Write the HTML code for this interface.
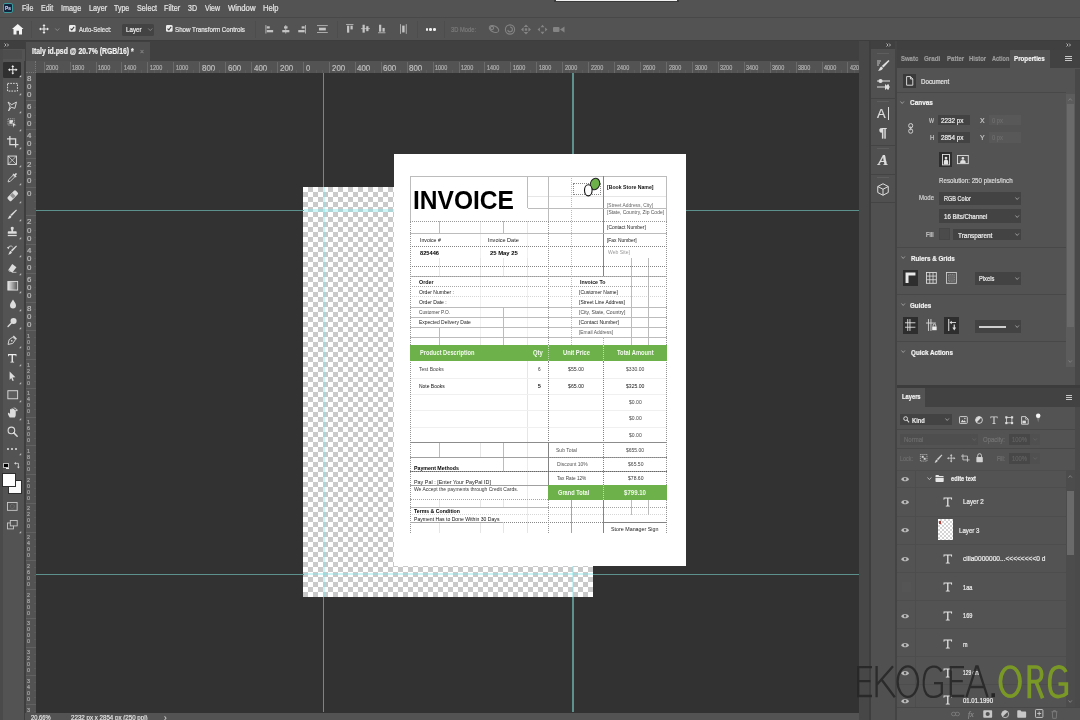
<!DOCTYPE html>
<html>
<head>
<meta charset="utf-8">
<title>Photoshop</title>
<style>
*{box-sizing:border-box;margin:0;padding:0}
html,body{width:1080px;height:720px;overflow:hidden;background:#535353;font-family:"Liberation Sans",sans-serif;color:#ddd}
body{position:relative}
#root{position:absolute;left:0;top:0;width:1080px;height:720px;overflow:hidden;will-change:transform}
.a{position:absolute}
.t{position:absolute;white-space:nowrap;transform-origin:0 50%;display:block}
svg{position:absolute;overflow:visible}
.ui .t{-webkit-text-stroke:.22px currentColor}
#checker{background:repeating-conic-gradient(#cacaca 0 25%,#fff 0 50%) 0 0/10px 10px}
</style>
</head>
<body>
<div id="root">
<div class="a" style="left:36px;top:73px;width:823px;height:639.5px;background:#323232;"></div>
<div class="a" id="checker" style="left:303.2px;top:187px;width:289.8px;height:410.3px"></div>
<div class="a" style="left:323.1px;top:73px;width:1.4px;height:114px;background:#5c918e;"></div>
<div class="a" style="left:323.1px;top:597.3px;width:1.4px;height:115.2px;background:#5c918e;"></div>
<div class="a" style="left:572.2px;top:73px;width:1.4px;height:114px;background:#5c918e;"></div>
<div class="a" style="left:572.2px;top:597.3px;width:1.4px;height:115.2px;background:#5c918e;"></div>
<div class="a" style="left:36px;top:209.8px;width:267.5px;height:1.4px;background:#5c918e;"></div>
<div class="a" style="left:593px;top:209.8px;width:266px;height:1.4px;background:#5c918e;"></div>
<div class="a" style="left:36px;top:573.6px;width:267.5px;height:1.4px;background:#5c918e;"></div>
<div class="a" style="left:593px;top:573.6px;width:266px;height:1.4px;background:#5c918e;"></div>
<div class="a" style="left:322.6px;top:187px;width:2.4px;height:410.3px;background:rgba(120,232,235,.38);"></div>
<div class="a" style="left:571.7px;top:187px;width:2.4px;height:410.3px;background:rgba(120,232,235,.38);"></div>
<div class="a" style="left:303.5px;top:209.3px;width:289.5px;height:2.4px;background:rgba(120,232,235,.38);"></div>
<div class="a" style="left:303.5px;top:573.1px;width:289.5px;height:2.4px;background:rgba(120,232,235,.38);"></div>
<div class="a" id="page" style="left:394px;top:154px;width:292px;height:412px;background:#fff"></div>
<div class="a" style="left:439.0px;top:221.0px;height:12.0px;width:0;border-left:1px solid #e6e6e6"></div>
<div class="a" style="left:479.5px;top:221.0px;height:12.0px;width:0;border-left:1px solid #e6e6e6"></div>
<div class="a" style="left:502.8px;top:221.0px;height:12.0px;width:0;border-left:1px solid #e6e6e6"></div>
<div class="a" style="left:527.0px;top:221.0px;height:12.0px;width:0;border-left:1px solid #e6e6e6"></div>
<div class="a" style="left:439.0px;top:258.0px;height:18.0px;width:0;border-left:1px solid #e6e6e6"></div>
<div class="a" style="left:479.5px;top:258.0px;height:18.0px;width:0;border-left:1px solid #e6e6e6"></div>
<div class="a" style="left:502.8px;top:258.0px;height:18.0px;width:0;border-left:1px solid #e6e6e6"></div>
<div class="a" style="left:527.0px;top:258.0px;height:18.0px;width:0;border-left:1px solid #e6e6e6"></div>
<div class="a" style="left:439.0px;top:337.5px;height:7.5px;width:0;border-left:1px solid #e6e6e6"></div>
<div class="a" style="left:479.5px;top:337.5px;height:7.5px;width:0;border-left:1px solid #e6e6e6"></div>
<div class="a" style="left:502.8px;top:337.5px;height:7.5px;width:0;border-left:1px solid #e6e6e6"></div>
<div class="a" style="left:527.0px;top:337.5px;height:7.5px;width:0;border-left:1px solid #e6e6e6"></div>
<div class="a" style="left:439.0px;top:442.5px;height:14.5px;width:0;border-left:1px solid #e6e6e6"></div>
<div class="a" style="left:479.5px;top:442.5px;height:14.5px;width:0;border-left:1px solid #e6e6e6"></div>
<div class="a" style="left:502.8px;top:442.5px;height:14.5px;width:0;border-left:1px solid #e6e6e6"></div>
<div class="a" style="left:527.0px;top:442.5px;height:14.5px;width:0;border-left:1px solid #e6e6e6"></div>
<div class="a" style="left:439.0px;top:499.5px;height:7.5px;width:0;border-left:1px solid #e6e6e6"></div>
<div class="a" style="left:479.5px;top:499.5px;height:7.5px;width:0;border-left:1px solid #e6e6e6"></div>
<div class="a" style="left:502.8px;top:499.5px;height:7.5px;width:0;border-left:1px solid #e6e6e6"></div>
<div class="a" style="left:527.0px;top:499.5px;height:7.5px;width:0;border-left:1px solid #e6e6e6"></div>
<div class="a" style="left:439.0px;top:522.0px;height:11.3px;width:0;border-left:1px solid #e6e6e6"></div>
<div class="a" style="left:479.5px;top:522.0px;height:11.3px;width:0;border-left:1px solid #e6e6e6"></div>
<div class="a" style="left:502.8px;top:522.0px;height:11.3px;width:0;border-left:1px solid #e6e6e6"></div>
<div class="a" style="left:527.0px;top:522.0px;height:11.3px;width:0;border-left:1px solid #e6e6e6"></div>
<div class="a" style="left:479.5px;top:233.0px;height:25.0px;width:0;border-left:1px solid #f0f0f0"></div>
<div class="a" style="left:479.5px;top:276.0px;height:61.0px;width:0;border-left:1px solid #f0f0f0"></div>
<div class="a" style="left:527.0px;top:233.0px;height:25.0px;width:0;border-left:1px solid #f0f0f0"></div>
<div class="a" style="left:527.0px;top:276.0px;height:61.0px;width:0;border-left:1px solid #f0f0f0"></div>
<div class="a" style="left:527.0px;top:361.0px;height:81.0px;width:0;border-left:1px solid #e6e6e6"></div>
<div class="a" style="left:527.0px;top:457.0px;height:65.0px;width:0;border-left:1px solid #ececec"></div>
<div class="a" style="left:527.5px;top:195.8px;width:139.2px;height:0;border-top:1px solid #e6e6e6"></div>
<div class="a" style="left:410.3px;top:377.5px;width:256.4px;height:0;border-top:1px solid #f0f0f0"></div>
<div class="a" style="left:410.3px;top:393.5px;width:256.4px;height:0;border-top:1px solid #f0f0f0"></div>
<div class="a" style="left:410.3px;top:409.5px;width:256.4px;height:0;border-top:1px solid #f0f0f0"></div>
<div class="a" style="left:410.3px;top:426.5px;width:256.4px;height:0;border-top:1px solid #f0f0f0"></div>
<div class="a" style="left:410.3px;top:296.2px;width:256.4px;height:0;border-top:1px dotted #d6d6d6"></div>
<div class="a" style="left:410.3px;top:513.5px;width:256.4px;height:0;border-top:1px dotted #d6d6d6"></div>
<div class="a" style="left:410.3px;top:175.8px;width:256.4px;height:0;border-top:1px solid #bcbcbc"></div>
<div class="a" style="left:409.8px;top:176.3px;height:44.7px;width:0;border-left:1px solid #bcbcbc"></div>
<div class="a" style="left:409.8px;top:221.0px;height:312.3px;width:0;border-left:1px dotted #959595"></div>
<div class="a" style="left:666.2px;top:176.3px;height:44.7px;width:0;border-left:1px solid #bcbcbc"></div>
<div class="a" style="left:666.2px;top:221.0px;height:312.3px;width:0;border-left:1px dotted #959595"></div>
<div class="a" style="left:547.8px;top:176.3px;height:44.7px;width:0;border-left:1px solid #bcbcbc"></div>
<div class="a" style="left:547.8px;top:221.0px;height:124.0px;width:0;border-left:1px dotted #959595"></div>
<div class="a" style="left:547.8px;top:361.0px;height:81.5px;width:0;border-left:1px dotted #848484"></div>
<div class="a" style="left:547.8px;top:442.5px;height:43.5px;width:0;border-left:1px solid #848484"></div>
<div class="a" style="left:547.8px;top:499.0px;height:34.3px;width:0;border-left:1px dotted #959595"></div>
<div class="a" style="left:571.2px;top:176.3px;height:168.7px;width:0;border-left:1px dotted #bbb"></div>
<div class="a" style="left:571.2px;top:499.0px;height:34.3px;width:0;border-left:1px solid #a5a5a5"></div>
<div class="a" style="left:603.2px;top:176.3px;height:99.7px;width:0;border-left:1px solid #848484"></div>
<div class="a" style="left:603.2px;top:337.0px;height:8.0px;width:0;border-left:1px dotted #b0b0b0"></div>
<div class="a" style="left:603.2px;top:361.0px;height:124.0px;width:0;border-left:1px dotted #848484"></div>
<div class="a" style="left:603.2px;top:499.0px;height:34.3px;width:0;border-left:1px solid #848484"></div>
<div class="a" style="left:630.8px;top:258.0px;height:87.0px;width:0;border-left:1px solid #bcbcbc"></div>
<div class="a" style="left:648.2px;top:258.0px;height:87.0px;width:0;border-left:1px solid #bcbcbc"></div>
<div class="a" style="left:630.8px;top:499.0px;height:16.0px;width:0;border-left:1px solid #bcbcbc"></div>
<div class="a" style="left:648.2px;top:499.0px;height:16.0px;width:0;border-left:1px solid #bcbcbc"></div>
<div class="a" style="left:527.0px;top:176.0px;height:32.0px;width:0;border-left:1px solid #bcbcbc"></div>
<div class="a" style="left:439.0px;top:221.0px;height:12.0px;width:0;border-left:1px solid #bcbcbc"></div>
<div class="a" style="left:502.8px;top:221.0px;height:12.0px;width:0;border-left:1px solid #bcbcbc"></div>
<div class="a" style="left:439.0px;top:327.0px;height:18.0px;width:0;border-left:1px solid #bcbcbc"></div>
<div class="a" style="left:502.8px;top:307.0px;height:38.0px;width:0;border-left:1px solid #bcbcbc"></div>
<div class="a" style="left:439.0px;top:442.0px;height:15.0px;width:0;border-left:1px solid #bcbcbc"></div>
<div class="a" style="left:502.8px;top:442.0px;height:29.0px;width:0;border-left:1px solid #bcbcbc"></div>
<div class="a" style="left:527.5px;top:207.8px;width:139.2px;height:0;border-top:1px solid #bcbcbc"></div>
<div class="a" style="left:410.3px;top:220.8px;width:256.4px;height:0;border-top:1px dotted #999"></div>
<div class="a" style="left:410.3px;top:232.8px;width:256.4px;height:0;border-top:1px solid #bcbcbc"></div>
<div class="a" style="left:410.3px;top:245.8px;width:256.4px;height:0;border-top:1px dotted #848484"></div>
<div class="a" style="left:410.3px;top:265.8px;width:256.4px;height:0;border-top:1px dotted #848484"></div>
<div class="a" style="left:410.3px;top:275.8px;width:256.4px;height:0;border-top:1px solid #bcbcbc"></div>
<div class="a" style="left:410.3px;top:275.8px;width:256.4px;height:0;border-top:1px dotted #999"></div>
<div class="a" style="left:410.3px;top:285.7px;width:256.4px;height:0;border-top:1px dotted #a8a8a8"></div>
<div class="a" style="left:410.3px;top:306.5px;width:256.4px;height:0;border-top:1px solid #bcbcbc"></div>
<div class="a" style="left:410.3px;top:317.0px;width:256.4px;height:0;border-top:1px solid #bcbcbc"></div>
<div class="a" style="left:410.3px;top:327.0px;width:256.4px;height:0;border-top:1px solid #bcbcbc"></div>
<div class="a" style="left:410.3px;top:337.0px;width:256.4px;height:0;border-top:1px solid #bcbcbc"></div>
<div class="a" style="left:410.3px;top:442.0px;width:256.4px;height:0;border-top:1px solid #8c8c8c"></div>
<div class="a" style="left:410.3px;top:456.5px;width:256.4px;height:0;border-top:1px solid #a0a0a0"></div>
<div class="a" style="left:548.0px;top:456.5px;width:118.7px;height:0;border-top:1px dotted #848484"></div>
<div class="a" style="left:410.3px;top:470.8px;width:256.4px;height:0;border-top:1px solid #a0a0a0"></div>
<div class="a" style="left:410.3px;top:470.8px;width:256.4px;height:0;border-top:1px dotted #666"></div>
<div class="a" style="left:410.3px;top:484.8px;width:137.7px;height:0;border-top:1px solid #a0a0a0"></div>
<div class="a" style="left:410.3px;top:499.0px;width:137.7px;height:0;border-top:1px dotted #a5a5a5"></div>
<div class="a" style="left:410.3px;top:506.8px;width:256.4px;height:0;border-top:1px dotted #a5a5a5"></div>
<div class="a" style="left:410.3px;top:506.8px;width:137.7px;height:0;border-top:1px solid #b8b8b8"></div>
<div class="a" style="left:410.3px;top:521.7px;width:256.4px;height:0;border-top:1px dotted #888"></div>
<div class="a" style="left:410.3px;top:521.7px;width:92.7px;height:0;border-top:1px solid #aaa"></div>
<div class="a" style="left:603.7px;top:521.7px;width:63.0px;height:0;border-top:1px solid #848484"></div>
<div class="a" style="left:410.3px;top:345px;width:256.4px;height:16px;background:#6cb14a;"></div>
<div class="a" style="left:548.3px;top:485.3px;width:118.4px;height:14.4px;background:#6cb14a;"></div>
<div class="a" style="left:547.8px;top:345px;height:16px;width:0;border-left:1px dotted rgba(255,255,255,.6)"></div>
<div class="a" style="left:603.2px;top:345px;height:16px;width:0;border-left:1px dotted rgba(255,255,255,.6)"></div>
<div class="a" style="left:603.2px;top:485.3px;height:14.4px;width:0;border-left:1px dotted rgba(255,255,255,.6)"></div>
<div class="a" style="left:573.3px;top:183.3px;width:28px;height:12px;border:1px dotted #888"></div>
<svg class="a" style="left:570px;top:174px" width="40" height="30" viewBox="570 174 40 30"><ellipse cx="595" cy="184" rx="4.6" ry="5.8" fill="#6cb14a" stroke="#222" stroke-width="1" transform="rotate(20 595 184)"/><ellipse cx="588.3" cy="190.3" rx="3.8" ry="5.6" fill="#fff" stroke="#111" stroke-width="1.1"/></svg>
<span class="t" style="left:412.80px;top:186.00px;font-size:25.8px;line-height:28.00px;color:#000;font-weight:bold;transform:scaleX(0.952);">INVOICE</span>
<span class="t" style="left:420.00px;top:237.00px;font-size:5.3px;line-height:6.00px;color:#111;transform:scaleX(0.981);">Invoice #</span>
<span class="t" style="left:488.00px;top:237.00px;font-size:5.3px;line-height:6.00px;color:#111;transform:scaleX(1.046);">Invoice Date</span>
<span class="t" style="left:419.70px;top:250.00px;font-size:5.3px;line-height:6.00px;color:#000;font-weight:bold;transform:scaleX(1.074);">825446</span>
<span class="t" style="left:489.70px;top:250.00px;font-size:5.3px;line-height:6.00px;color:#000;font-weight:bold;transform:scaleX(1.110);">25 May 25</span>
<span class="t" style="left:606.70px;top:184.00px;font-size:5.6px;line-height:6.00px;color:#111;font-weight:bold;transform:scaleX(0.924);">[Book Store Name]</span>
<span class="t" style="left:607.00px;top:202.00px;font-size:5px;line-height:6.00px;color:#666;transform:scaleX(0.980);">[Street Address, City]</span>
<span class="t" style="left:607.00px;top:209.00px;font-size:5px;line-height:6.00px;color:#555;transform:scaleX(0.993);">[State, Country, Zip Code]</span>
<span class="t" style="left:607.00px;top:224.00px;font-size:5px;line-height:6.00px;color:#222;transform:scaleX(0.990);">[Contact Number]</span>
<span class="t" style="left:607.00px;top:237.00px;font-size:5.3px;line-height:6.00px;color:#111;transform:scaleX(0.925);">[Fax Number]</span>
<span class="t" style="left:608.00px;top:249.00px;font-size:5px;line-height:6.00px;color:#999;transform:scaleX(1.019);">Web Site]</span>
<span class="t" style="left:419.20px;top:279.00px;font-size:5.6px;line-height:6.00px;color:#111;font-weight:bold;transform:scaleX(0.951);">Order</span>
<span class="t" style="left:419.00px;top:289.00px;font-size:5.3px;line-height:6.00px;color:#111;transform:scaleX(0.951);">Order Number :</span>
<span class="t" style="left:419.00px;top:299.00px;font-size:5.3px;line-height:6.00px;color:#111;transform:scaleX(0.950);">Order Date :</span>
<span class="t" style="left:419.00px;top:309.00px;font-size:5px;line-height:6.00px;color:#444;transform:scaleX(0.956);">Customer P.O.</span>
<span class="t" style="left:419.00px;top:319.00px;font-size:5px;line-height:6.00px;color:#222;transform:scaleX(0.992);">Expected Delivery Date</span>
<span class="t" style="left:579.50px;top:279.00px;font-size:5.6px;line-height:6.00px;color:#111;font-weight:bold;transform:scaleX(0.935);">Invoice To</span>
<span class="t" style="left:579.00px;top:289.00px;font-size:5.3px;line-height:6.00px;color:#222;transform:scaleX(0.939);">[Customer Name]</span>
<span class="t" style="left:579.00px;top:299.00px;font-size:5.3px;line-height:6.00px;color:#111;transform:scaleX(0.935);">[Street Line Address]</span>
<span class="t" style="left:579.00px;top:309.00px;font-size:5px;line-height:6.00px;color:#444;transform:scaleX(1.012);">[City, State, Country]</span>
<span class="t" style="left:579.00px;top:319.00px;font-size:5px;line-height:6.00px;color:#222;transform:scaleX(1.021);">[Contact Number]</span>
<span class="t" style="left:579.00px;top:329.00px;font-size:5px;line-height:6.00px;color:#555;transform:scaleX(0.979);">[Email Address]</span>
<span class="t" style="left:419.70px;top:349.00px;font-size:6.6px;line-height:7.00px;color:#f4fbef;font-weight:bold;transform:scaleX(0.864);">Product Description</span>
<span class="t" style="left:533.00px;top:349.00px;font-size:6.6px;line-height:7.00px;color:#f4fbef;font-weight:bold;transform:scaleX(0.891);">Qty</span>
<span class="t" style="left:562.50px;top:349.00px;font-size:6.6px;line-height:7.00px;color:#f4fbef;font-weight:bold;transform:scaleX(0.876);">Unit Price</span>
<span class="t" style="left:616.70px;top:349.00px;font-size:6.6px;line-height:7.00px;color:#f4fbef;font-weight:bold;transform:scaleX(0.876);">Total Amount</span>
<span class="t" style="left:419.00px;top:366.00px;font-size:5px;line-height:6.00px;color:#444;transform:scaleX(1.010);">Test Books</span>
<span class="t" style="left:419.00px;top:383.00px;font-size:5.2px;line-height:6.00px;color:#111;transform:scaleX(0.956);">Note Books</span>
<span class="t" style="left:537.50px;top:366.00px;font-size:5px;line-height:6.00px;color:#333;transform:scaleX(0.935);">6</span>
<span class="t" style="left:537.50px;top:383.00px;font-size:5.2px;line-height:6.00px;color:#000;font-weight:bold;transform:scaleX(0.968);">5</span>
<span class="t" style="left:568.30px;top:366.00px;font-size:5px;line-height:6.00px;color:#333;transform:scaleX(1.046);">$55.00</span>
<span class="t" style="left:568.30px;top:383.00px;font-size:5.2px;line-height:6.00px;color:#111;transform:scaleX(1.006);">$65.00</span>
<span class="t" style="left:625.80px;top:366.00px;font-size:5px;line-height:6.00px;color:#444;transform:scaleX(1.018);">$330.00</span>
<span class="t" style="left:626.00px;top:383.00px;font-size:5.2px;line-height:6.00px;color:#111;transform:scaleX(0.984);">$325.00</span>
<span class="t" style="left:629.00px;top:399.00px;font-size:5px;line-height:6.00px;color:#444;transform:scaleX(1.015);">$0.00</span>
<span class="t" style="left:629.00px;top:415.00px;font-size:5px;line-height:6.00px;color:#444;transform:scaleX(1.015);">$0.00</span>
<span class="t" style="left:629.00px;top:432.00px;font-size:5px;line-height:6.00px;color:#444;transform:scaleX(1.015);">$0.00</span>
<span class="t" style="left:556.00px;top:448.00px;font-size:4.8px;line-height:5.00px;color:#555;transform:scaleX(1.054);">Sub Total</span>
<span class="t" style="left:626.00px;top:448.00px;font-size:4.8px;line-height:5.00px;color:#444;transform:scaleX(1.038);">$655.00</span>
<span class="t" style="left:556.70px;top:462.00px;font-size:4.8px;line-height:5.00px;color:#555;transform:scaleX(1.040);">Discount 10%</span>
<span class="t" style="left:627.50px;top:462.00px;font-size:4.8px;line-height:5.00px;color:#444;transform:scaleX(1.056);">$65.50</span>
<span class="t" style="left:556.70px;top:476.00px;font-size:4.8px;line-height:5.00px;color:#444;transform:scaleX(0.981);">Tax Rate 12%</span>
<span class="t" style="left:627.50px;top:476.00px;font-size:4.8px;line-height:5.00px;color:#333;transform:scaleX(1.056);">$78.60</span>
<span class="t" style="left:557.50px;top:489.00px;font-size:6.6px;line-height:7.00px;color:#f4fbef;font-weight:bold;transform:scaleX(0.857);">Grand Total</span>
<span class="t" style="left:624.20px;top:489.00px;font-size:6.6px;line-height:7.00px;color:#f4fbef;font-weight:bold;transform:scaleX(0.922);">$799.10</span>
<span class="t" style="left:413.80px;top:465.00px;font-size:5.6px;line-height:6.00px;color:#000;font-weight:bold;transform:scaleX(0.939);">Payment Methods</span>
<span class="t" style="left:413.80px;top:479.00px;font-size:5.8px;line-height:6.00px;color:#222;transform:scaleX(0.933);">Pay Pal : [Enter Your PayPal ID]</span>
<span class="t" style="left:414.00px;top:487.00px;font-size:4.7px;line-height:5.00px;color:#333;transform:scaleX(1.063);">We Accept the payments through Credit Cards.</span>
<span class="t" style="left:414.00px;top:508.00px;font-size:5.6px;line-height:6.00px;color:#000;font-weight:bold;transform:scaleX(0.926);">Terms &amp; Condition</span>
<span class="t" style="left:414.00px;top:516.00px;font-size:5.3px;line-height:6.00px;color:#111;transform:scaleX(0.961);">Payment Has to Done Within 30 Days</span>
<span class="t" style="left:611.30px;top:526.00px;font-size:5.6px;line-height:6.00px;color:#222;transform:scaleX(0.954);">Store Manager Sign</span>
<div class="ui">
<div class="a" style="left:0px;top:0px;width:1080px;height:17px;background:#535353;"></div>
<div class="a" style="left:0px;top:16.5px;width:1080px;height:1px;background:#484848;"></div>
<div class="a" style="left:554px;top:0px;width:125px;height:2.2px;background:#3a3a3a;"></div>
<div class="a" style="left:555.6px;top:0px;width:121.5px;height:1.3px;background:#f2f2f2;"></div>
<div class="a" style="left:3.2px;top:2.6px;width:10px;height:10.6px;background:#12263f;border:1px solid #3a9a9c;border-radius:2px"></div>
<span class="t" style="left:5.10px;top:5.00px;font-size:5.5px;line-height:6.00px;color:#c9c4e6;font-weight:bold;transform:scaleX(0.862);">Ps</span>
<span class="t" style="left:22.00px;top:3.00px;font-size:8.3px;line-height:10.00px;color:#e4e4e4;transform:scaleX(0.845);">File</span>
<span class="t" style="left:40.80px;top:3.00px;font-size:8.3px;line-height:10.00px;color:#e4e4e4;transform:scaleX(0.853);">Edit</span>
<span class="t" style="left:60.80px;top:3.00px;font-size:8.3px;line-height:10.00px;color:#e4e4e4;transform:scaleX(0.876);">Image</span>
<span class="t" style="left:88.80px;top:3.00px;font-size:8.3px;line-height:10.00px;color:#e4e4e4;transform:scaleX(0.877);">Layer</span>
<span class="t" style="left:113.80px;top:3.00px;font-size:8.3px;line-height:10.00px;color:#e4e4e4;transform:scaleX(0.845);">Type</span>
<span class="t" style="left:137.00px;top:3.00px;font-size:8.3px;line-height:10.00px;color:#e4e4e4;transform:scaleX(0.867);">Select</span>
<span class="t" style="left:163.80px;top:3.00px;font-size:8.3px;line-height:10.00px;color:#e4e4e4;transform:scaleX(0.878);">Filter</span>
<span class="t" style="left:188.00px;top:3.00px;font-size:8.3px;line-height:10.00px;color:#e4e4e4;transform:scaleX(0.848);">3D</span>
<span class="t" style="left:205.00px;top:3.00px;font-size:8.3px;line-height:10.00px;color:#e4e4e4;transform:scaleX(0.841);">View</span>
<span class="t" style="left:227.50px;top:3.00px;font-size:8.3px;line-height:10.00px;color:#e4e4e4;transform:scaleX(0.932);">Window</span>
<span class="t" style="left:262.50px;top:3.00px;font-size:8.3px;line-height:10.00px;color:#e4e4e4;transform:scaleX(0.908);">Help</span>
<div class="a" style="left:0px;top:17.5px;width:1080px;height:23px;background:#535353;"></div>
<div class="a" style="left:0px;top:40px;width:1080px;height:1.2px;background:#3d3d3d;"></div>
<svg style="left:12px;top:24px" width="11.5" height="10.5" viewBox="0 0 23 21"><path d="M11.5 0 L23 10 L20 10 L20 21 L14 21 L14 13.5 L9 13.5 L9 21 L3 21 L3 10 L0 10 Z" fill="#f4f4f4"/></svg>
<div class="a" style="left:31px;top:21px;width:1px;height:17px;background:#4d4d4d;"></div>
<div class="a" style="left:254.5px;top:21px;width:1px;height:17px;background:#4d4d4d;"></div>
<div class="a" style="left:336.5px;top:21px;width:1px;height:17px;background:#4d4d4d;"></div>
<div class="a" style="left:416.5px;top:21px;width:1px;height:17px;background:#4d4d4d;"></div>
<div class="a" style="left:443.5px;top:21px;width:1px;height:17px;background:#4d4d4d;"></div>
<svg style="left:38.5px;top:24px" width="10" height="10" viewBox="0 0 20 20"><path d="M10 0 L13 4 L11 4 L11 9 L16 9 L16 7 L20 10 L16 13 L16 11 L11 11 L11 16 L13 16 L10 20 L7 16 L9 16 L9 11 L4 11 L4 13 L0 10 L4 7 L4 9 L9 9 L9 4 L7 4 Z" fill="#efefef"/></svg>
<svg style="left:54.5px;top:28px" width="4.5" height="3.2" viewBox="0 0 9 6"><path d="M0.5 0.8 L4.5 5 L8.5 0.8" fill="none" stroke="#9a9a9a" stroke-width="1.5"/></svg>
<svg style="left:68.8px;top:25.3px" width="6.6" height="6.8" viewBox="0 0 13 13"><rect x="0" y="0" width="13" height="13" rx="2.5" fill="#ececec"/><path d="M3 6.8 L5.6 9.4 L10.2 3.6" fill="none" stroke="#3a3a3a" stroke-width="2"/></svg>
<span class="t" style="left:78.50px;top:25.00px;font-size:7.6px;line-height:9.00px;color:#e8e8e8;transform:scaleX(0.785);">Auto-Select:</span>
<div class="a" style="left:121.7px;top:23.5px;width:32.5px;height:12px;background:#434343;border-radius:1.5px"></div>
<span class="t" style="left:126.30px;top:25.00px;font-size:7.8px;line-height:9.00px;color:#f0f0f0;transform:scaleX(0.794);">Layer</span>
<svg style="left:147.5px;top:28.2px" width="4.5" height="3.2" viewBox="0 0 9 6"><path d="M0.5 0.8 L4.5 5 L8.5 0.8" fill="none" stroke="#9a9a9a" stroke-width="1.5"/></svg>
<svg style="left:165.7px;top:25.3px" width="6.6" height="6.8" viewBox="0 0 13 13"><rect x="0" y="0" width="13" height="13" rx="2.5" fill="#ececec"/><path d="M3 6.8 L5.6 9.4 L10.2 3.6" fill="none" stroke="#3a3a3a" stroke-width="2"/></svg>
<span class="t" style="left:175.00px;top:25.00px;font-size:7.6px;line-height:9.00px;color:#e8e8e8;transform:scaleX(0.816);">Show Transform Controls</span>
<svg style="left:265px;top:24.6px" width="8.4" height="8.6" viewBox="0 0 16.8 17"><rect x="1" y="0" width="1.6" height="17" fill="#c4c4c4"/><rect x="3.5" y="2.5" width="6" height="4.5" fill="#c4c4c4"/><rect x="3.5" y="10" width="12.8" height="4.5" fill="#c4c4c4"/></svg>
<svg style="left:282.3px;top:24.6px" width="7.6" height="8.6" viewBox="0 0 15.2 17"><rect x="6.8" y="0" width="1.6" height="17" fill="#c4c4c4"/><rect x="4.1" y="2.5" width="7" height="4.5" fill="#c4c4c4"/><rect x="0.5" y="10" width="14.2" height="4.5" fill="#c4c4c4"/></svg>
<svg style="left:297.5px;top:24.6px" width="8.4" height="8.6" viewBox="0 0 16.8 17"><rect x="14.200000000000001" y="0" width="1.6" height="17" fill="#c4c4c4"/><rect x="7.300000000000001" y="2.5" width="6" height="4.5" fill="#c4c4c4"/><rect x="0.5" y="10" width="12.8" height="4.5" fill="#c4c4c4"/></svg>
<svg style="left:316.7px;top:25px" width="10.8" height="8.4" viewBox="0 0 22 17"><rect x="0" y="0.5" width="22" height="1.6" fill="#c4c4c4"/><rect x="0" y="14.5" width="22" height="1.6" fill="#c4c4c4"/><rect x="4" y="5.5" width="14" height="5.5" fill="#c4c4c4"/></svg>
<svg style="left:345.8px;top:24.2px" width="7.5" height="9.4" viewBox="0 0 15.0 19"><rect x="0" y="0.5" width="15.0" height="1.6" fill="#c4c4c4"/><rect x="2" y="3.5" width="4.5" height="14" fill="#c4c4c4"/><rect x="9" y="3.5" width="4.5" height="7.5" fill="#c4c4c4"/></svg>
<svg style="left:360.8px;top:24.2px" width="9" height="9.4" viewBox="0 0 18 19"><rect x="0" y="8.7" width="18" height="1.6" fill="#c4c4c4"/><rect x="3" y="1.5" width="4.5" height="16" fill="#c4c4c4"/><rect x="10.5" y="4.5" width="4.5" height="10" fill="#c4c4c4"/></svg>
<svg style="left:378.3px;top:24.2px" width="7.5" height="9.4" viewBox="0 0 15.0 19"><rect x="0" y="17" width="15.0" height="1.6" fill="#c4c4c4"/><rect x="2" y="1.5" width="4.5" height="14" fill="#c4c4c4"/><rect x="9" y="8" width="4.5" height="7.5" fill="#c4c4c4"/></svg>
<svg style="left:400px;top:24px" width="6.8" height="10" viewBox="0 0 14 20"><rect x="0.5" y="0" width="1.6" height="20" fill="#c4c4c4"/><rect x="12" y="0" width="1.6" height="20" fill="#c4c4c4"/><rect x="4.5" y="3" width="5" height="14" fill="#c4c4c4"/></svg>
<div class="a" style="left:425.6px;top:28.1px;width:2.5px;height:2.5px;border-radius:50%;background:#f0f0f0"></div>
<div class="a" style="left:429.40000000000003px;top:28.1px;width:2.5px;height:2.5px;border-radius:50%;background:#f0f0f0"></div>
<div class="a" style="left:433.2px;top:28.1px;width:2.5px;height:2.5px;border-radius:50%;background:#f0f0f0"></div>
<span class="t" style="left:450.80px;top:25.00px;font-size:8px;line-height:9.00px;color:#7c7c7c;transform:scaleX(0.721);">3D Mode:</span>
<svg style="left:487.5px;top:23.5px" width="78" height="11" viewBox="0 0 78 11"><g fill="none" stroke="#848484" stroke-width="1.1"><ellipse cx="6" cy="5" rx="5" ry="3" transform="rotate(25 6 5)"/><circle cx="4" cy="4" r="1.6"/><circle cx="22" cy="5.5" r="4.6"/><path d="M22 3 a2.4 2.4 0 1 1 -2.3 3"/></g><g fill="#848484"><path d="M38 0.5 l2.3 2.6 h-4.6z M38 10.5 l2.3-2.6 h-4.6z M33 5.5 l2.6-2.3 v4.6z M43 5.5 l-2.6-2.3 v4.6z"/><rect x="36.8" y="4.3" width="2.4" height="2.4"/><path d="M54.5 0.8 l2 2.4 h-4z M54.5 10.2 l2-2.4 h-4z M49.5 5.5 l2.4-2 v4z M59.5 5.5 l-2.4-2 v4z"/><rect x="65" y="3" width="6.5" height="5" rx="1"/><path d="M72 5.5 l4.5-3 v6z"/></g></svg>
<div class="a" style="left:25px;top:41px;width:1055px;height:20.5px;background:#404040;"></div>
<div class="a" style="left:26px;top:41.5px;width:124px;height:20px;background:#4f4f4f;"></div>
<span class="t" style="left:32.00px;top:46.00px;font-size:8.4px;line-height:10.00px;color:#f0f0f0;font-weight:bold;transform:scaleX(0.820);">Italy id.psd @ 20.7% (RGB/16) *</span>
<span class="t" style="left:139.50px;top:47.00px;font-size:8px;line-height:9.00px;color:#858585;transform:scaleX(0.856);">×</span>
<div class="a" style="left:0px;top:41px;width:24.5px;height:679px;background:#535353;"></div>
<div class="a" style="left:0px;top:41px;width:3px;height:679px;background:#4a4a4a;"></div>
<div class="a" style="left:0px;top:41px;width:24.5px;height:7.5px;background:#3f3f3f;"></div>
<div class="a" style="left:3px;top:50px;width:19px;height:9px;background:#4d4d4d;"></div>
<svg style="left:4px;top:42.7px" width="5" height="4" viewBox="0 0 10 8"><path d="M1 1 L4 4 L1 7 M6 1 L9 4 L6 7" fill="none" stroke="#cfcfcf" stroke-width="1.6"/></svg>
<div class="a" style="left:3.4px;top:61.8px;width:18px;height:16px;background:#303030;border-radius:1px"></div>
<svg style="left:7.7px;top:65.2px" width="9.6" height="9.6" viewBox="0 0 20 20"><path d="M10 0 L13 4 L11 4 L11 9 L16 9 L16 7 L20 10 L16 13 L16 11 L11 11 L11 16 L13 16 L10 20 L7 16 L9 16 L9 11 L4 11 L4 13 L0 10 L4 7 L4 9 L9 9 L9 4 L7 4 Z" fill="#f2f2f2"/></svg>
<svg style="left:7.0px;top:82.2px" width="11" height="11" viewBox="0 0 20 20"><rect x="1" y="2.5" width="18" height="14" fill="none" stroke="#dcdcdc" stroke-width="1.8" stroke-dasharray="3 2"/></svg>
<svg style="left:18.7px;top:92.7px" width="2.2" height="2.2" viewBox="0 0 4 4"><path d="M4 0 V4 H0 Z" fill="#b8b8b8"/></svg>
<svg style="left:7.2px;top:100.5px" width="10.5" height="10.5" viewBox="0 0 20 20"><path d="M2 2 L9 7 L18 2 L15 14 L8 12 L3 19 L6 10 Z" fill="none" stroke="#dcdcdc" stroke-width="1.8" stroke-linejoin="round"/></svg>
<svg style="left:18.7px;top:110.7px" width="2.2" height="2.2" viewBox="0 0 4 4"><path d="M4 0 V4 H0 Z" fill="#b8b8b8"/></svg>
<svg style="left:7.2px;top:118.3px" width="10.5" height="10.5" viewBox="0 0 20 20"><rect x="2" y="1.5" width="12" height="12" fill="none" stroke="#dcdcdc" stroke-width="1.2" stroke-dasharray="2 1.5"/><rect x="4.5" y="4" width="7" height="7" fill="#dcdcdc"/><path d="M10 8 L18 14 L14 14.5 L12 19 Z" fill="#f0f0f0" stroke="#535353" stroke-width=".8"/></svg>
<svg style="left:18.7px;top:128.6px" width="2.2" height="2.2" viewBox="0 0 4 4"><path d="M4 0 V4 H0 Z" fill="#b8b8b8"/></svg>
<svg style="left:6.8px;top:135.9px" width="11.5" height="11.5" viewBox="0 0 20 20"><path d="M5 0 V15 H20 M0 5 H15 V20" fill="none" stroke="#dcdcdc" stroke-width="2.2"/></svg>
<svg style="left:18.7px;top:146.7px" width="2.2" height="2.2" viewBox="0 0 4 4"><path d="M4 0 V4 H0 Z" fill="#b8b8b8"/></svg>
<svg style="left:7.2px;top:154.6px" width="10.5" height="10.5" viewBox="0 0 20 20"><rect x="2" y="2" width="16" height="16" fill="none" stroke="#dcdcdc" stroke-width="1.8"/><path d="M2 2 L18 18 M18 2 L2 18" stroke="#dcdcdc" stroke-width="1.4"/></svg>
<svg style="left:18.7px;top:164.8px" width="2.2" height="2.2" viewBox="0 0 4 4"><path d="M4 0 V4 H0 Z" fill="#b8b8b8"/></svg>
<svg style="left:7.0px;top:172.3px" width="11" height="11" viewBox="0 0 20 20"><path d="M2 18 L3 14 L11 6 L14 9 L6 17 Z" fill="none" stroke="#dcdcdc" stroke-width="1.6"/><path d="M10 4 L16 10 L17.5 8.5 L15.5 6.5 L18 4 A2 2 0 0 0 16 2 L13.5 4.5 L11.5 2.5 Z" fill="#dcdcdc"/></svg>
<svg style="left:18.7px;top:182.8px" width="2.2" height="2.2" viewBox="0 0 4 4"><path d="M4 0 V4 H0 Z" fill="#b8b8b8"/></svg>
<svg style="left:6.8px;top:190.1px" width="11.5" height="11.5" viewBox="0 0 20 20"><g transform="rotate(-45 10 10)"><rect x="0" y="5.5" width="20" height="9" rx="2.5" fill="#dcdcdc"/><rect x="7" y="6.5" width="6" height="7" fill="#535353" opacity=".55"/></g></svg>
<svg style="left:18.7px;top:200.8px" width="2.2" height="2.2" viewBox="0 0 4 4"><path d="M4 0 V4 H0 Z" fill="#b8b8b8"/></svg>
<svg style="left:7.2px;top:208.8px" width="10.5" height="10.5" viewBox="0 0 20 20"><path d="M17.5 1 L19 2.5 L9 13.5 L6.5 11 Z" fill="#dcdcdc"/><path d="M6 12 L8.5 14.5 C8 18 4 19 1 18.5 C3.5 17 3 13.5 6 12 Z" fill="#dcdcdc"/></svg>
<svg style="left:18.7px;top:219.0px" width="2.2" height="2.2" viewBox="0 0 4 4"><path d="M4 0 V4 H0 Z" fill="#b8b8b8"/></svg>
<svg style="left:7.2px;top:226.8px" width="10.5" height="10.5" viewBox="0 0 20 20"><path d="M7 1.5 a3.2 3.2 0 0 1 6 0 c0 2.5 -1.5 3.5 -1.5 6.5 H17 a1.5 1.5 0 0 1 1.5 1.5 V13 H1.5 V9.5 A1.5 1.5 0 0 1 3 8 H8.5 C8.5 5 7 4 7 1.5 Z" fill="#dcdcdc"/><rect x="1.5" y="15" width="17" height="2.4" fill="#dcdcdc"/></svg>
<svg style="left:18.7px;top:237.0px" width="2.2" height="2.2" viewBox="0 0 4 4"><path d="M4 0 V4 H0 Z" fill="#b8b8b8"/></svg>
<svg style="left:7.2px;top:244.8px" width="10.5" height="10.5" viewBox="0 0 20 20"><path d="M17.5 1 L19 2.5 L10 12.5 L7.5 10 Z" fill="#dcdcdc"/><path d="M7 11 L9.5 13.5 C9 17 5 18.5 2 18 C4.5 16.5 4 12.5 7 11 Z" fill="#dcdcdc"/><path d="M2 6 a5 5 0 0 1 9 -2" fill="none" stroke="#dcdcdc" stroke-width="1.5"/><path d="M0 4 L2.4 8 L5 4.5 Z" fill="#dcdcdc"/></svg>
<svg style="left:18.7px;top:255.0px" width="2.2" height="2.2" viewBox="0 0 4 4"><path d="M4 0 V4 H0 Z" fill="#b8b8b8"/></svg>
<svg style="left:7.2px;top:262.9px" width="10.5" height="10.5" viewBox="0 0 20 20"><path d="M10 2 L18 8 L11 17 H5 L2 14 Z" fill="#dcdcdc"/><path d="M2.5 13.5 L7 17" stroke="#535353" stroke-width="1.3"/><path d="M9 17.8 H18" stroke="#dcdcdc" stroke-width="1.4"/></svg>
<svg style="left:18.7px;top:273.2px" width="2.2" height="2.2" viewBox="0 0 4 4"><path d="M4 0 V4 H0 Z" fill="#b8b8b8"/></svg>
<svg style="left:6.8px;top:280.4px" width="11.5" height="11.5" viewBox="0 0 20 20"><defs><linearGradient id="gg" x1="0" x2="1"><stop offset="0" stop-color="#e8e8e8"/><stop offset="1" stop-color="#555"/></linearGradient></defs><rect x="1.5" y="2.5" width="17" height="15" fill="url(#gg)" stroke="#dcdcdc" stroke-width="1.6"/></svg>
<svg style="left:18.7px;top:291.2px" width="2.2" height="2.2" viewBox="0 0 4 4"><path d="M4 0 V4 H0 Z" fill="#b8b8b8"/></svg>
<svg style="left:7.5px;top:299.2px" width="10" height="10" viewBox="0 0 20 20"><path d="M10 1 C13 6 16 9 16 13 a6 6 0 0 1 -12 0 C4 9 7 6 10 1 Z" fill="#dcdcdc"/></svg>
<svg style="left:18.7px;top:309.2px" width="2.2" height="2.2" viewBox="0 0 4 4"><path d="M4 0 V4 H0 Z" fill="#b8b8b8"/></svg>
<svg style="left:7.2px;top:317.1px" width="10.5" height="10.5" viewBox="0 0 20 20"><circle cx="12.5" cy="7.5" r="5.8" fill="#dcdcdc"/><path d="M8.5 11.5 L2 18" stroke="#dcdcdc" stroke-width="2.6" stroke-linecap="round"/></svg>
<svg style="left:18.7px;top:327.3px" width="2.2" height="2.2" viewBox="0 0 4 4"><path d="M4 0 V4 H0 Z" fill="#b8b8b8"/></svg>
<svg style="left:7.2px;top:335.2px" width="10.5" height="10.5" viewBox="0 0 20 20"><path d="M2 18 L4 9 L11 4 L16 9 L11 16 Z" fill="none" stroke="#dcdcdc" stroke-width="1.8" stroke-linejoin="round"/><circle cx="9" cy="11" r="1.6" fill="#dcdcdc"/><path d="M12 2 L18 8" stroke="#dcdcdc" stroke-width="2.6"/></svg>
<svg style="left:18.7px;top:345.5px" width="2.2" height="2.2" viewBox="0 0 4 4"><path d="M4 0 V4 H0 Z" fill="#b8b8b8"/></svg>
<svg style="left:7.2px;top:353.4px" width="10.5" height="10.5" viewBox="0 0 20 20"><path d="M2 2 H18 V6 H16.5 V4.2 H11.3 V16.5 H13.5 V18 H6.5 V16.5 H8.7 V4.2 H3.5 V6 H2 Z" fill="#f0f0f0"/></svg>
<svg style="left:18.7px;top:363.6px" width="2.2" height="2.2" viewBox="0 0 4 4"><path d="M4 0 V4 H0 Z" fill="#b8b8b8"/></svg>
<svg style="left:7.2px;top:371.4px" width="10.5" height="10.5" viewBox="0 0 20 20"><path d="M5 1 L16 12 L10.5 12.3 L13 18 L10.5 19 L8 13.5 L5 17 Z" fill="#dcdcdc"/></svg>
<svg style="left:18.7px;top:381.6px" width="2.2" height="2.2" viewBox="0 0 4 4"><path d="M4 0 V4 H0 Z" fill="#b8b8b8"/></svg>
<svg style="left:6.8px;top:388.9px" width="11.5" height="11.5" viewBox="0 0 20 20"><rect x="1.5" y="3" width="17" height="14" fill="#5e5e5e" stroke="#dcdcdc" stroke-width="1.6"/></svg>
<svg style="left:18.7px;top:399.7px" width="2.2" height="2.2" viewBox="0 0 4 4"><path d="M4 0 V4 H0 Z" fill="#b8b8b8"/></svg>
<svg style="left:7.0px;top:407.2px" width="11" height="11" viewBox="0 0 20 20"><path d="M5 19 C2 15 1 12 2 11 C3 10 4.5 11 5.5 13 V5 a1.3 1.3 0 0 1 2.6 0 V3.5 a1.3 1.3 0 0 1 2.6 0 V4.5 a1.3 1.3 0 0 1 2.6 0 V6.5 a1.3 1.3 0 0 1 2.6 0 V13 C16 16 15 18 14 19 Z" fill="#dcdcdc"/><path d="M12 1.5 a6 6 0 0 1 6 5" fill="none" stroke="#dcdcdc" stroke-width="1.4"/><path d="M19.5 4.5 L18.2 8 L15.5 5.5 Z" fill="#dcdcdc"/></svg>
<svg style="left:18.7px;top:417.7px" width="2.2" height="2.2" viewBox="0 0 4 4"><path d="M4 0 V4 H0 Z" fill="#b8b8b8"/></svg>
<svg style="left:7.0px;top:425.5px" width="11" height="11" viewBox="0 0 20 20"><circle cx="8" cy="8" r="6" fill="none" stroke="#dcdcdc" stroke-width="2"/><path d="M12.5 12.5 L18.5 18.5" stroke="#dcdcdc" stroke-width="2.6" stroke-linecap="round"/></svg>
<svg style="left:19px;top:75px" width="2.2" height="2.2" viewBox="0 0 4 4"><path d="M4 0 V4 H0 Z" fill="#d0d0d0"/></svg>
<div class="a" style="left:7.1000000000000005px;top:447.9px;width:2.4px;height:2.4px;border-radius:50%;background:#e0e0e0"></div>
<div class="a" style="left:11.0px;top:447.9px;width:2.4px;height:2.4px;border-radius:50%;background:#e0e0e0"></div>
<div class="a" style="left:14.900000000000002px;top:447.9px;width:2.4px;height:2.4px;border-radius:50%;background:#e0e0e0"></div>
<svg style="left:18.7px;top:453px" width="2.2" height="2.2" viewBox="0 0 4 4"><path d="M4 0 V4 H0 Z" fill="#b8b8b8"/></svg>
<div class="a" style="left:5.6px;top:465.2px;width:3.6px;height:3.6px;background:#f4f4f4;"></div>
<div class="a" style="left:4px;top:463.5px;width:3.6px;height:3.6px;background:#000;outline:0.6px solid #bbb"></div>
<svg style="left:13.8px;top:462.3px" width="6.6" height="6.6" viewBox="0 0 12 12"><path d="M3 2.5 H8 V9" fill="none" stroke="#d8d8d8" stroke-width="1.5"/><path d="M0 2.5 L3.5 0 V5 Z M8 12 L5.5 8.5 H10.5 Z" fill="#d8d8d8"/></svg>
<div class="a" style="left:9.4px;top:480.8px;width:11.4px;height:12.2px;background:#fbfbfb;outline:1px solid #2e2e2e"></div>
<div class="a" style="left:3.4px;top:474px;width:11.2px;height:11.6px;background:#ffffff;outline:1px solid #2e2e2e"></div>
<svg style="left:7.3px;top:501.6px" width="10.6" height="8.8" viewBox="0 0 21 17.5"><rect x="0.9" y="0.9" width="19.2" height="15.7" fill="none" stroke="#c8c8c8" stroke-width="1.8"/><circle cx="10.5" cy="8.7" r="4" fill="none" stroke="#8a8a8a" stroke-width="1.2" stroke-dasharray="1.5 1"/></svg>
<svg style="left:7px;top:520px" width="10.8" height="9.4" viewBox="0 0 21.5 19"><rect x="0.9" y="6" width="12" height="12" fill="none" stroke="#c8c8c8" stroke-width="1.8"/><rect x="6.5" y="0.9" width="14" height="11" fill="#535353" stroke="#c8c8c8" stroke-width="1.8"/></svg>
<svg style="left:18.7px;top:530.5px" width="2.2" height="2.2" viewBox="0 0 4 4"><path d="M4 0 V4 H0 Z" fill="#b8b8b8"/></svg>
<div class="a" style="left:25px;top:60.5px;width:834px;height:12.3px;background:#535353;"></div>
<div class="a" style="left:25.5px;top:72.5px;width:10.3px;height:640px;background:#535353;"></div>
<div class="a" style="left:24.3px;top:61px;width:1.3px;height:659px;background:#3e3e3e;"></div>
<div class="a" style="left:26px;top:61px;width:10px;height:12px;background:#585858;border-right:1px dotted #777;border-bottom:1px dotted #777"></div>
<div class="a" style="left:43.6px;top:61.5px;width:1px;height:11px;background:#6a6a6a;"></div>
<span class="t" style="left:46.30px;top:64.00px;font-size:6.6px;line-height:7.00px;color:#b0b0b0;transform:scaleX(0.831);">2000</span>
<div class="a" style="left:50.1px;top:70px;width:1px;height:2.5px;background:#5b5b5b;"></div>
<div class="a" style="left:56.6px;top:70px;width:1px;height:2.5px;background:#5b5b5b;"></div>
<div class="a" style="left:63.0px;top:70px;width:1px;height:2.5px;background:#5b5b5b;"></div>
<div class="a" style="left:69.5px;top:61.5px;width:1px;height:11px;background:#6a6a6a;"></div>
<span class="t" style="left:72.23px;top:64.00px;font-size:6.6px;line-height:7.00px;color:#b0b0b0;transform:scaleX(0.831);">1800</span>
<div class="a" style="left:76.0px;top:70px;width:1px;height:2.5px;background:#5b5b5b;"></div>
<div class="a" style="left:82.5px;top:70px;width:1px;height:2.5px;background:#5b5b5b;"></div>
<div class="a" style="left:89.0px;top:70px;width:1px;height:2.5px;background:#5b5b5b;"></div>
<div class="a" style="left:95.5px;top:61.5px;width:1px;height:11px;background:#6a6a6a;"></div>
<span class="t" style="left:98.16px;top:64.00px;font-size:6.6px;line-height:7.00px;color:#b0b0b0;transform:scaleX(0.831);">1600</span>
<div class="a" style="left:101.9px;top:70px;width:1px;height:2.5px;background:#5b5b5b;"></div>
<div class="a" style="left:108.4px;top:70px;width:1px;height:2.5px;background:#5b5b5b;"></div>
<div class="a" style="left:114.9px;top:70px;width:1px;height:2.5px;background:#5b5b5b;"></div>
<div class="a" style="left:121.4px;top:61.5px;width:1px;height:11px;background:#6a6a6a;"></div>
<span class="t" style="left:124.09px;top:64.00px;font-size:6.6px;line-height:7.00px;color:#b0b0b0;transform:scaleX(0.831);">1400</span>
<div class="a" style="left:127.9px;top:70px;width:1px;height:2.5px;background:#5b5b5b;"></div>
<div class="a" style="left:134.4px;top:70px;width:1px;height:2.5px;background:#5b5b5b;"></div>
<div class="a" style="left:140.8px;top:70px;width:1px;height:2.5px;background:#5b5b5b;"></div>
<div class="a" style="left:147.3px;top:61.5px;width:1px;height:11px;background:#6a6a6a;"></div>
<span class="t" style="left:150.02px;top:64.00px;font-size:6.6px;line-height:7.00px;color:#b0b0b0;transform:scaleX(0.831);">1200</span>
<div class="a" style="left:153.8px;top:70px;width:1px;height:2.5px;background:#5b5b5b;"></div>
<div class="a" style="left:160.3px;top:70px;width:1px;height:2.5px;background:#5b5b5b;"></div>
<div class="a" style="left:166.8px;top:70px;width:1px;height:2.5px;background:#5b5b5b;"></div>
<div class="a" style="left:173.2px;top:61.5px;width:1px;height:11px;background:#6a6a6a;"></div>
<span class="t" style="left:175.95px;top:64.00px;font-size:6.6px;line-height:7.00px;color:#b0b0b0;transform:scaleX(0.831);">1000</span>
<div class="a" style="left:179.7px;top:70px;width:1px;height:2.5px;background:#5b5b5b;"></div>
<div class="a" style="left:186.2px;top:70px;width:1px;height:2.5px;background:#5b5b5b;"></div>
<div class="a" style="left:192.7px;top:70px;width:1px;height:2.5px;background:#5b5b5b;"></div>
<div class="a" style="left:199.2px;top:61.5px;width:1px;height:11px;background:#6a6a6a;"></div>
<span class="t" style="left:201.88px;top:64.00px;font-size:8.2px;line-height:9.00px;color:#bdbdbd;transform:scaleX(0.965);">800</span>
<div class="a" style="left:205.7px;top:70px;width:1px;height:2.5px;background:#5b5b5b;"></div>
<div class="a" style="left:212.1px;top:70px;width:1px;height:2.5px;background:#5b5b5b;"></div>
<div class="a" style="left:218.6px;top:70px;width:1px;height:2.5px;background:#5b5b5b;"></div>
<div class="a" style="left:225.1px;top:61.5px;width:1px;height:11px;background:#6a6a6a;"></div>
<span class="t" style="left:227.81px;top:64.00px;font-size:8.2px;line-height:9.00px;color:#bdbdbd;transform:scaleX(0.965);">600</span>
<div class="a" style="left:231.6px;top:70px;width:1px;height:2.5px;background:#5b5b5b;"></div>
<div class="a" style="left:238.1px;top:70px;width:1px;height:2.5px;background:#5b5b5b;"></div>
<div class="a" style="left:244.6px;top:70px;width:1px;height:2.5px;background:#5b5b5b;"></div>
<div class="a" style="left:251.0px;top:61.5px;width:1px;height:11px;background:#6a6a6a;"></div>
<span class="t" style="left:253.74px;top:64.00px;font-size:8.2px;line-height:9.00px;color:#bdbdbd;transform:scaleX(0.965);">400</span>
<div class="a" style="left:257.5px;top:70px;width:1px;height:2.5px;background:#5b5b5b;"></div>
<div class="a" style="left:264.0px;top:70px;width:1px;height:2.5px;background:#5b5b5b;"></div>
<div class="a" style="left:270.5px;top:70px;width:1px;height:2.5px;background:#5b5b5b;"></div>
<div class="a" style="left:277.0px;top:61.5px;width:1px;height:11px;background:#6a6a6a;"></div>
<span class="t" style="left:279.67px;top:64.00px;font-size:8.2px;line-height:9.00px;color:#bdbdbd;transform:scaleX(0.965);">200</span>
<div class="a" style="left:283.5px;top:70px;width:1px;height:2.5px;background:#5b5b5b;"></div>
<div class="a" style="left:289.9px;top:70px;width:1px;height:2.5px;background:#5b5b5b;"></div>
<div class="a" style="left:296.4px;top:70px;width:1px;height:2.5px;background:#5b5b5b;"></div>
<div class="a" style="left:302.9px;top:61.5px;width:1px;height:11px;background:#6a6a6a;"></div>
<span class="t" style="left:305.60px;top:64.00px;font-size:8.2px;line-height:9.00px;color:#bdbdbd;transform:scaleX(0.921);">0</span>
<div class="a" style="left:309.4px;top:70px;width:1px;height:2.5px;background:#5b5b5b;"></div>
<div class="a" style="left:315.9px;top:70px;width:1px;height:2.5px;background:#5b5b5b;"></div>
<div class="a" style="left:322.3px;top:70px;width:1px;height:2.5px;background:#5b5b5b;"></div>
<div class="a" style="left:328.8px;top:61.5px;width:1px;height:11px;background:#6a6a6a;"></div>
<span class="t" style="left:331.53px;top:64.00px;font-size:8.2px;line-height:9.00px;color:#bdbdbd;transform:scaleX(0.965);">200</span>
<div class="a" style="left:335.3px;top:70px;width:1px;height:2.5px;background:#5b5b5b;"></div>
<div class="a" style="left:341.8px;top:70px;width:1px;height:2.5px;background:#5b5b5b;"></div>
<div class="a" style="left:348.3px;top:70px;width:1px;height:2.5px;background:#5b5b5b;"></div>
<div class="a" style="left:354.8px;top:61.5px;width:1px;height:11px;background:#6a6a6a;"></div>
<span class="t" style="left:357.46px;top:64.00px;font-size:8.2px;line-height:9.00px;color:#bdbdbd;transform:scaleX(0.965);">400</span>
<div class="a" style="left:361.2px;top:70px;width:1px;height:2.5px;background:#5b5b5b;"></div>
<div class="a" style="left:367.7px;top:70px;width:1px;height:2.5px;background:#5b5b5b;"></div>
<div class="a" style="left:374.2px;top:70px;width:1px;height:2.5px;background:#5b5b5b;"></div>
<div class="a" style="left:380.7px;top:61.5px;width:1px;height:11px;background:#6a6a6a;"></div>
<span class="t" style="left:383.39px;top:64.00px;font-size:8.2px;line-height:9.00px;color:#bdbdbd;transform:scaleX(0.965);">600</span>
<div class="a" style="left:387.2px;top:70px;width:1px;height:2.5px;background:#5b5b5b;"></div>
<div class="a" style="left:393.7px;top:70px;width:1px;height:2.5px;background:#5b5b5b;"></div>
<div class="a" style="left:400.1px;top:70px;width:1px;height:2.5px;background:#5b5b5b;"></div>
<div class="a" style="left:406.6px;top:61.5px;width:1px;height:11px;background:#6a6a6a;"></div>
<span class="t" style="left:409.32px;top:64.00px;font-size:8.2px;line-height:9.00px;color:#bdbdbd;transform:scaleX(0.965);">800</span>
<div class="a" style="left:413.1px;top:70px;width:1px;height:2.5px;background:#5b5b5b;"></div>
<div class="a" style="left:419.6px;top:70px;width:1px;height:2.5px;background:#5b5b5b;"></div>
<div class="a" style="left:426.1px;top:70px;width:1px;height:2.5px;background:#5b5b5b;"></div>
<div class="a" style="left:432.5px;top:61.5px;width:1px;height:11px;background:#6a6a6a;"></div>
<span class="t" style="left:435.25px;top:64.00px;font-size:6.6px;line-height:7.00px;color:#b0b0b0;transform:scaleX(0.831);">1000</span>
<div class="a" style="left:439.0px;top:70px;width:1px;height:2.5px;background:#5b5b5b;"></div>
<div class="a" style="left:445.5px;top:70px;width:1px;height:2.5px;background:#5b5b5b;"></div>
<div class="a" style="left:452.0px;top:70px;width:1px;height:2.5px;background:#5b5b5b;"></div>
<div class="a" style="left:458.5px;top:61.5px;width:1px;height:11px;background:#6a6a6a;"></div>
<span class="t" style="left:461.18px;top:64.00px;font-size:6.6px;line-height:7.00px;color:#b0b0b0;transform:scaleX(0.831);">1200</span>
<div class="a" style="left:465.0px;top:70px;width:1px;height:2.5px;background:#5b5b5b;"></div>
<div class="a" style="left:471.4px;top:70px;width:1px;height:2.5px;background:#5b5b5b;"></div>
<div class="a" style="left:477.9px;top:70px;width:1px;height:2.5px;background:#5b5b5b;"></div>
<div class="a" style="left:484.4px;top:61.5px;width:1px;height:11px;background:#6a6a6a;"></div>
<span class="t" style="left:487.11px;top:64.00px;font-size:6.6px;line-height:7.00px;color:#b0b0b0;transform:scaleX(0.831);">1400</span>
<div class="a" style="left:490.9px;top:70px;width:1px;height:2.5px;background:#5b5b5b;"></div>
<div class="a" style="left:497.4px;top:70px;width:1px;height:2.5px;background:#5b5b5b;"></div>
<div class="a" style="left:503.9px;top:70px;width:1px;height:2.5px;background:#5b5b5b;"></div>
<div class="a" style="left:510.3px;top:61.5px;width:1px;height:11px;background:#6a6a6a;"></div>
<span class="t" style="left:513.04px;top:64.00px;font-size:6.6px;line-height:7.00px;color:#b0b0b0;transform:scaleX(0.831);">1600</span>
<div class="a" style="left:516.8px;top:70px;width:1px;height:2.5px;background:#5b5b5b;"></div>
<div class="a" style="left:523.3px;top:70px;width:1px;height:2.5px;background:#5b5b5b;"></div>
<div class="a" style="left:529.8px;top:70px;width:1px;height:2.5px;background:#5b5b5b;"></div>
<div class="a" style="left:536.3px;top:61.5px;width:1px;height:11px;background:#6a6a6a;"></div>
<span class="t" style="left:538.97px;top:64.00px;font-size:6.6px;line-height:7.00px;color:#b0b0b0;transform:scaleX(0.831);">1800</span>
<div class="a" style="left:542.8px;top:70px;width:1px;height:2.5px;background:#5b5b5b;"></div>
<div class="a" style="left:549.2px;top:70px;width:1px;height:2.5px;background:#5b5b5b;"></div>
<div class="a" style="left:555.7px;top:70px;width:1px;height:2.5px;background:#5b5b5b;"></div>
<div class="a" style="left:562.2px;top:61.5px;width:1px;height:11px;background:#6a6a6a;"></div>
<span class="t" style="left:564.90px;top:64.00px;font-size:6.6px;line-height:7.00px;color:#b0b0b0;transform:scaleX(0.831);">2000</span>
<div class="a" style="left:568.7px;top:70px;width:1px;height:2.5px;background:#5b5b5b;"></div>
<div class="a" style="left:575.2px;top:70px;width:1px;height:2.5px;background:#5b5b5b;"></div>
<div class="a" style="left:581.6px;top:70px;width:1px;height:2.5px;background:#5b5b5b;"></div>
<div class="a" style="left:588.1px;top:61.5px;width:1px;height:11px;background:#6a6a6a;"></div>
<span class="t" style="left:590.83px;top:64.00px;font-size:6.6px;line-height:7.00px;color:#b0b0b0;transform:scaleX(0.831);">2200</span>
<div class="a" style="left:594.6px;top:70px;width:1px;height:2.5px;background:#5b5b5b;"></div>
<div class="a" style="left:601.1px;top:70px;width:1px;height:2.5px;background:#5b5b5b;"></div>
<div class="a" style="left:607.6px;top:70px;width:1px;height:2.5px;background:#5b5b5b;"></div>
<div class="a" style="left:614.1px;top:61.5px;width:1px;height:11px;background:#6a6a6a;"></div>
<span class="t" style="left:616.76px;top:64.00px;font-size:6.6px;line-height:7.00px;color:#b0b0b0;transform:scaleX(0.831);">2400</span>
<div class="a" style="left:620.5px;top:70px;width:1px;height:2.5px;background:#5b5b5b;"></div>
<div class="a" style="left:627.0px;top:70px;width:1px;height:2.5px;background:#5b5b5b;"></div>
<div class="a" style="left:633.5px;top:70px;width:1px;height:2.5px;background:#5b5b5b;"></div>
<div class="a" style="left:640.0px;top:61.5px;width:1px;height:11px;background:#6a6a6a;"></div>
<span class="t" style="left:642.69px;top:64.00px;font-size:6.6px;line-height:7.00px;color:#b0b0b0;transform:scaleX(0.831);">2600</span>
<div class="a" style="left:646.5px;top:70px;width:1px;height:2.5px;background:#5b5b5b;"></div>
<div class="a" style="left:653.0px;top:70px;width:1px;height:2.5px;background:#5b5b5b;"></div>
<div class="a" style="left:659.4px;top:70px;width:1px;height:2.5px;background:#5b5b5b;"></div>
<div class="a" style="left:665.9px;top:61.5px;width:1px;height:11px;background:#6a6a6a;"></div>
<span class="t" style="left:668.62px;top:64.00px;font-size:6.6px;line-height:7.00px;color:#b0b0b0;transform:scaleX(0.831);">2800</span>
<div class="a" style="left:672.4px;top:70px;width:1px;height:2.5px;background:#5b5b5b;"></div>
<div class="a" style="left:678.9px;top:70px;width:1px;height:2.5px;background:#5b5b5b;"></div>
<div class="a" style="left:685.4px;top:70px;width:1px;height:2.5px;background:#5b5b5b;"></div>
<div class="a" style="left:691.8px;top:61.5px;width:1px;height:11px;background:#6a6a6a;"></div>
<span class="t" style="left:694.55px;top:64.00px;font-size:6.6px;line-height:7.00px;color:#b0b0b0;transform:scaleX(0.831);">3000</span>
<div class="a" style="left:698.3px;top:70px;width:1px;height:2.5px;background:#5b5b5b;"></div>
<div class="a" style="left:704.8px;top:70px;width:1px;height:2.5px;background:#5b5b5b;"></div>
<div class="a" style="left:711.3px;top:70px;width:1px;height:2.5px;background:#5b5b5b;"></div>
<div class="a" style="left:717.8px;top:61.5px;width:1px;height:11px;background:#6a6a6a;"></div>
<span class="t" style="left:720.48px;top:64.00px;font-size:6.6px;line-height:7.00px;color:#b0b0b0;transform:scaleX(0.831);">3200</span>
<div class="a" style="left:724.3px;top:70px;width:1px;height:2.5px;background:#5b5b5b;"></div>
<div class="a" style="left:730.7px;top:70px;width:1px;height:2.5px;background:#5b5b5b;"></div>
<div class="a" style="left:737.2px;top:70px;width:1px;height:2.5px;background:#5b5b5b;"></div>
<div class="a" style="left:743.7px;top:61.5px;width:1px;height:11px;background:#6a6a6a;"></div>
<span class="t" style="left:746.41px;top:64.00px;font-size:6.6px;line-height:7.00px;color:#b0b0b0;transform:scaleX(0.831);">3400</span>
<div class="a" style="left:750.2px;top:70px;width:1px;height:2.5px;background:#5b5b5b;"></div>
<div class="a" style="left:756.7px;top:70px;width:1px;height:2.5px;background:#5b5b5b;"></div>
<div class="a" style="left:763.2px;top:70px;width:1px;height:2.5px;background:#5b5b5b;"></div>
<div class="a" style="left:769.6px;top:61.5px;width:1px;height:11px;background:#6a6a6a;"></div>
<span class="t" style="left:772.34px;top:64.00px;font-size:6.6px;line-height:7.00px;color:#b0b0b0;transform:scaleX(0.831);">3600</span>
<div class="a" style="left:776.1px;top:70px;width:1px;height:2.5px;background:#5b5b5b;"></div>
<div class="a" style="left:782.6px;top:70px;width:1px;height:2.5px;background:#5b5b5b;"></div>
<div class="a" style="left:789.1px;top:70px;width:1px;height:2.5px;background:#5b5b5b;"></div>
<div class="a" style="left:795.6px;top:61.5px;width:1px;height:11px;background:#6a6a6a;"></div>
<span class="t" style="left:798.27px;top:64.00px;font-size:6.6px;line-height:7.00px;color:#b0b0b0;transform:scaleX(0.831);">3800</span>
<div class="a" style="left:802.1px;top:70px;width:1px;height:2.5px;background:#5b5b5b;"></div>
<div class="a" style="left:808.5px;top:70px;width:1px;height:2.5px;background:#5b5b5b;"></div>
<div class="a" style="left:815.0px;top:70px;width:1px;height:2.5px;background:#5b5b5b;"></div>
<div class="a" style="left:821.5px;top:61.5px;width:1px;height:11px;background:#6a6a6a;"></div>
<span class="t" style="left:824.20px;top:64.00px;font-size:6.6px;line-height:7.00px;color:#b0b0b0;transform:scaleX(0.831);">4000</span>
<div class="a" style="left:828.0px;top:70px;width:1px;height:2.5px;background:#5b5b5b;"></div>
<div class="a" style="left:834.5px;top:70px;width:1px;height:2.5px;background:#5b5b5b;"></div>
<div class="a" style="left:840.9px;top:70px;width:1px;height:2.5px;background:#5b5b5b;"></div>
<div class="a" style="left:847.4px;top:61.5px;width:1px;height:11px;background:#6a6a6a;"></div>
<span class="t" style="left:850.13px;top:64.00px;font-size:6.6px;line-height:7.00px;color:#b0b0b0;transform:scaleX(0.831);">4200</span>
<div class="a" style="left:853.9px;top:70px;width:1px;height:2.5px;background:#5b5b5b;"></div>
<div class="a" style="left:26px;top:100.2px;width:10px;height:1px;background:#626262;"></div>
<span class="t" style="left:26.80px;top:102.00px;font-size:8px;line-height:9.00px;color:#bdbdbd;transform:scaleX(0.989);">6</span>
<span class="t" style="left:26.80px;top:111.00px;font-size:8px;line-height:9.00px;color:#bdbdbd;transform:scaleX(0.989);">0</span>
<span class="t" style="left:26.80px;top:119.00px;font-size:8px;line-height:9.00px;color:#bdbdbd;transform:scaleX(0.989);">0</span>
<div class="a" style="left:33.5px;top:107.4px;width:2.5px;height:1px;background:#5b5b5b;"></div>
<div class="a" style="left:33.5px;top:114.6px;width:2.5px;height:1px;background:#5b5b5b;"></div>
<div class="a" style="left:33.5px;top:121.8px;width:2.5px;height:1px;background:#5b5b5b;"></div>
<div class="a" style="left:26px;top:129.0px;width:10px;height:1px;background:#626262;"></div>
<span class="t" style="left:26.80px;top:131.00px;font-size:8px;line-height:9.00px;color:#bdbdbd;transform:scaleX(0.989);">4</span>
<span class="t" style="left:26.80px;top:139.00px;font-size:8px;line-height:9.00px;color:#bdbdbd;transform:scaleX(0.989);">0</span>
<span class="t" style="left:26.80px;top:148.00px;font-size:8px;line-height:9.00px;color:#bdbdbd;transform:scaleX(0.989);">0</span>
<div class="a" style="left:33.5px;top:136.2px;width:2.5px;height:1px;background:#5b5b5b;"></div>
<div class="a" style="left:33.5px;top:143.4px;width:2.5px;height:1px;background:#5b5b5b;"></div>
<div class="a" style="left:33.5px;top:150.6px;width:2.5px;height:1px;background:#5b5b5b;"></div>
<div class="a" style="left:26px;top:157.8px;width:10px;height:1px;background:#626262;"></div>
<span class="t" style="left:26.80px;top:160.00px;font-size:8px;line-height:9.00px;color:#bdbdbd;transform:scaleX(0.989);">2</span>
<span class="t" style="left:26.80px;top:168.00px;font-size:8px;line-height:9.00px;color:#bdbdbd;transform:scaleX(0.989);">0</span>
<span class="t" style="left:26.80px;top:176.00px;font-size:8px;line-height:9.00px;color:#bdbdbd;transform:scaleX(0.989);">0</span>
<div class="a" style="left:33.5px;top:164.9px;width:2.5px;height:1px;background:#5b5b5b;"></div>
<div class="a" style="left:33.5px;top:172.1px;width:2.5px;height:1px;background:#5b5b5b;"></div>
<div class="a" style="left:33.5px;top:179.3px;width:2.5px;height:1px;background:#5b5b5b;"></div>
<div class="a" style="left:26px;top:186.5px;width:10px;height:1px;background:#626262;"></div>
<span class="t" style="left:26.80px;top:189.00px;font-size:8px;line-height:9.00px;color:#bdbdbd;transform:scaleX(0.989);">0</span>
<div class="a" style="left:33.5px;top:193.7px;width:2.5px;height:1px;background:#5b5b5b;"></div>
<div class="a" style="left:33.5px;top:200.9px;width:2.5px;height:1px;background:#5b5b5b;"></div>
<div class="a" style="left:33.5px;top:208.1px;width:2.5px;height:1px;background:#5b5b5b;"></div>
<div class="a" style="left:26px;top:215.2px;width:10px;height:1px;background:#626262;"></div>
<span class="t" style="left:26.80px;top:217.00px;font-size:8px;line-height:9.00px;color:#bdbdbd;transform:scaleX(0.989);">2</span>
<span class="t" style="left:26.80px;top:226.00px;font-size:8px;line-height:9.00px;color:#bdbdbd;transform:scaleX(0.989);">0</span>
<span class="t" style="left:26.80px;top:234.00px;font-size:8px;line-height:9.00px;color:#bdbdbd;transform:scaleX(0.989);">0</span>
<div class="a" style="left:33.5px;top:222.4px;width:2.5px;height:1px;background:#5b5b5b;"></div>
<div class="a" style="left:33.5px;top:229.6px;width:2.5px;height:1px;background:#5b5b5b;"></div>
<div class="a" style="left:33.5px;top:236.8px;width:2.5px;height:1px;background:#5b5b5b;"></div>
<div class="a" style="left:26px;top:244.0px;width:10px;height:1px;background:#626262;"></div>
<span class="t" style="left:26.80px;top:246.00px;font-size:8px;line-height:9.00px;color:#bdbdbd;transform:scaleX(0.989);">4</span>
<span class="t" style="left:26.80px;top:254.00px;font-size:8px;line-height:9.00px;color:#bdbdbd;transform:scaleX(0.989);">0</span>
<span class="t" style="left:26.80px;top:263.00px;font-size:8px;line-height:9.00px;color:#bdbdbd;transform:scaleX(0.989);">0</span>
<div class="a" style="left:33.5px;top:251.2px;width:2.5px;height:1px;background:#5b5b5b;"></div>
<div class="a" style="left:33.5px;top:258.4px;width:2.5px;height:1px;background:#5b5b5b;"></div>
<div class="a" style="left:33.5px;top:265.6px;width:2.5px;height:1px;background:#5b5b5b;"></div>
<div class="a" style="left:26px;top:272.8px;width:10px;height:1px;background:#626262;"></div>
<span class="t" style="left:26.80px;top:275.00px;font-size:8px;line-height:9.00px;color:#bdbdbd;transform:scaleX(0.989);">6</span>
<span class="t" style="left:26.80px;top:283.00px;font-size:8px;line-height:9.00px;color:#bdbdbd;transform:scaleX(0.989);">0</span>
<span class="t" style="left:26.80px;top:291.00px;font-size:8px;line-height:9.00px;color:#bdbdbd;transform:scaleX(0.989);">0</span>
<div class="a" style="left:33.5px;top:279.9px;width:2.5px;height:1px;background:#5b5b5b;"></div>
<div class="a" style="left:33.5px;top:287.1px;width:2.5px;height:1px;background:#5b5b5b;"></div>
<div class="a" style="left:33.5px;top:294.3px;width:2.5px;height:1px;background:#5b5b5b;"></div>
<div class="a" style="left:26px;top:301.5px;width:10px;height:1px;background:#626262;"></div>
<span class="t" style="left:26.80px;top:304.00px;font-size:8px;line-height:9.00px;color:#bdbdbd;transform:scaleX(0.989);">8</span>
<span class="t" style="left:26.80px;top:312.00px;font-size:8px;line-height:9.00px;color:#bdbdbd;transform:scaleX(0.989);">0</span>
<span class="t" style="left:26.80px;top:320.00px;font-size:8px;line-height:9.00px;color:#bdbdbd;transform:scaleX(0.989);">0</span>
<div class="a" style="left:33.5px;top:308.7px;width:2.5px;height:1px;background:#5b5b5b;"></div>
<div class="a" style="left:33.5px;top:315.9px;width:2.5px;height:1px;background:#5b5b5b;"></div>
<div class="a" style="left:33.5px;top:323.1px;width:2.5px;height:1px;background:#5b5b5b;"></div>
<div class="a" style="left:26px;top:330.2px;width:10px;height:1px;background:#626262;"></div>
<span class="t" style="left:26.80px;top:332.00px;font-size:6.2px;line-height:7.00px;color:#a8a8a8;transform:scaleX(0.870);">1</span>
<span class="t" style="left:26.80px;top:338.00px;font-size:6.2px;line-height:7.00px;color:#a8a8a8;transform:scaleX(0.870);">0</span>
<span class="t" style="left:26.80px;top:344.00px;font-size:6.2px;line-height:7.00px;color:#a8a8a8;transform:scaleX(0.870);">0</span>
<span class="t" style="left:26.80px;top:350.00px;font-size:6.2px;line-height:7.00px;color:#a8a8a8;transform:scaleX(0.870);">0</span>
<div class="a" style="left:33.5px;top:337.4px;width:2.5px;height:1px;background:#5b5b5b;"></div>
<div class="a" style="left:33.5px;top:344.6px;width:2.5px;height:1px;background:#5b5b5b;"></div>
<div class="a" style="left:33.5px;top:351.8px;width:2.5px;height:1px;background:#5b5b5b;"></div>
<div class="a" style="left:26px;top:359.0px;width:10px;height:1px;background:#626262;"></div>
<span class="t" style="left:26.80px;top:361.00px;font-size:6.2px;line-height:7.00px;color:#a8a8a8;transform:scaleX(0.870);">1</span>
<span class="t" style="left:26.80px;top:367.00px;font-size:6.2px;line-height:7.00px;color:#a8a8a8;transform:scaleX(0.870);">2</span>
<span class="t" style="left:26.80px;top:373.00px;font-size:6.2px;line-height:7.00px;color:#a8a8a8;transform:scaleX(0.870);">0</span>
<span class="t" style="left:26.80px;top:379.00px;font-size:6.2px;line-height:7.00px;color:#a8a8a8;transform:scaleX(0.870);">0</span>
<div class="a" style="left:33.5px;top:366.2px;width:2.5px;height:1px;background:#5b5b5b;"></div>
<div class="a" style="left:33.5px;top:373.4px;width:2.5px;height:1px;background:#5b5b5b;"></div>
<div class="a" style="left:33.5px;top:380.6px;width:2.5px;height:1px;background:#5b5b5b;"></div>
<div class="a" style="left:26px;top:387.8px;width:10px;height:1px;background:#626262;"></div>
<span class="t" style="left:26.80px;top:389.00px;font-size:6.2px;line-height:7.00px;color:#a8a8a8;transform:scaleX(0.870);">1</span>
<span class="t" style="left:26.80px;top:395.00px;font-size:6.2px;line-height:7.00px;color:#a8a8a8;transform:scaleX(0.870);">4</span>
<span class="t" style="left:26.80px;top:401.00px;font-size:6.2px;line-height:7.00px;color:#a8a8a8;transform:scaleX(0.870);">0</span>
<span class="t" style="left:26.80px;top:407.00px;font-size:6.2px;line-height:7.00px;color:#a8a8a8;transform:scaleX(0.870);">0</span>
<div class="a" style="left:33.5px;top:394.9px;width:2.5px;height:1px;background:#5b5b5b;"></div>
<div class="a" style="left:33.5px;top:402.1px;width:2.5px;height:1px;background:#5b5b5b;"></div>
<div class="a" style="left:33.5px;top:409.3px;width:2.5px;height:1px;background:#5b5b5b;"></div>
<div class="a" style="left:26px;top:416.5px;width:10px;height:1px;background:#626262;"></div>
<span class="t" style="left:26.80px;top:418.00px;font-size:6.2px;line-height:7.00px;color:#a8a8a8;transform:scaleX(0.870);">1</span>
<span class="t" style="left:26.80px;top:424.00px;font-size:6.2px;line-height:7.00px;color:#a8a8a8;transform:scaleX(0.870);">6</span>
<span class="t" style="left:26.80px;top:430.00px;font-size:6.2px;line-height:7.00px;color:#a8a8a8;transform:scaleX(0.870);">0</span>
<span class="t" style="left:26.80px;top:436.00px;font-size:6.2px;line-height:7.00px;color:#a8a8a8;transform:scaleX(0.870);">0</span>
<div class="a" style="left:33.5px;top:423.7px;width:2.5px;height:1px;background:#5b5b5b;"></div>
<div class="a" style="left:33.5px;top:430.9px;width:2.5px;height:1px;background:#5b5b5b;"></div>
<div class="a" style="left:33.5px;top:438.1px;width:2.5px;height:1px;background:#5b5b5b;"></div>
<div class="a" style="left:26px;top:445.2px;width:10px;height:1px;background:#626262;"></div>
<span class="t" style="left:26.80px;top:447.00px;font-size:6.2px;line-height:7.00px;color:#a8a8a8;transform:scaleX(0.870);">1</span>
<span class="t" style="left:26.80px;top:453.00px;font-size:6.2px;line-height:7.00px;color:#a8a8a8;transform:scaleX(0.870);">8</span>
<span class="t" style="left:26.80px;top:459.00px;font-size:6.2px;line-height:7.00px;color:#a8a8a8;transform:scaleX(0.870);">0</span>
<span class="t" style="left:26.80px;top:465.00px;font-size:6.2px;line-height:7.00px;color:#a8a8a8;transform:scaleX(0.870);">0</span>
<div class="a" style="left:33.5px;top:452.4px;width:2.5px;height:1px;background:#5b5b5b;"></div>
<div class="a" style="left:33.5px;top:459.6px;width:2.5px;height:1px;background:#5b5b5b;"></div>
<div class="a" style="left:33.5px;top:466.8px;width:2.5px;height:1px;background:#5b5b5b;"></div>
<div class="a" style="left:26px;top:474.0px;width:10px;height:1px;background:#626262;"></div>
<span class="t" style="left:26.80px;top:476.00px;font-size:6.2px;line-height:7.00px;color:#a8a8a8;transform:scaleX(0.870);">2</span>
<span class="t" style="left:26.80px;top:482.00px;font-size:6.2px;line-height:7.00px;color:#a8a8a8;transform:scaleX(0.870);">0</span>
<span class="t" style="left:26.80px;top:488.00px;font-size:6.2px;line-height:7.00px;color:#a8a8a8;transform:scaleX(0.870);">0</span>
<span class="t" style="left:26.80px;top:494.00px;font-size:6.2px;line-height:7.00px;color:#a8a8a8;transform:scaleX(0.870);">0</span>
<div class="a" style="left:33.5px;top:481.2px;width:2.5px;height:1px;background:#5b5b5b;"></div>
<div class="a" style="left:33.5px;top:488.4px;width:2.5px;height:1px;background:#5b5b5b;"></div>
<div class="a" style="left:33.5px;top:495.6px;width:2.5px;height:1px;background:#5b5b5b;"></div>
<div class="a" style="left:26px;top:502.8px;width:10px;height:1px;background:#626262;"></div>
<span class="t" style="left:26.80px;top:504.00px;font-size:6.2px;line-height:7.00px;color:#a8a8a8;transform:scaleX(0.870);">2</span>
<span class="t" style="left:26.80px;top:510.00px;font-size:6.2px;line-height:7.00px;color:#a8a8a8;transform:scaleX(0.870);">2</span>
<span class="t" style="left:26.80px;top:516.00px;font-size:6.2px;line-height:7.00px;color:#a8a8a8;transform:scaleX(0.870);">0</span>
<span class="t" style="left:26.80px;top:522.00px;font-size:6.2px;line-height:7.00px;color:#a8a8a8;transform:scaleX(0.870);">0</span>
<div class="a" style="left:33.5px;top:509.9px;width:2.5px;height:1px;background:#5b5b5b;"></div>
<div class="a" style="left:33.5px;top:517.1px;width:2.5px;height:1px;background:#5b5b5b;"></div>
<div class="a" style="left:33.5px;top:524.3px;width:2.5px;height:1px;background:#5b5b5b;"></div>
<div class="a" style="left:26px;top:531.5px;width:10px;height:1px;background:#626262;"></div>
<span class="t" style="left:26.80px;top:533.00px;font-size:6.2px;line-height:7.00px;color:#a8a8a8;transform:scaleX(0.870);">2</span>
<span class="t" style="left:26.80px;top:539.00px;font-size:6.2px;line-height:7.00px;color:#a8a8a8;transform:scaleX(0.870);">4</span>
<span class="t" style="left:26.80px;top:545.00px;font-size:6.2px;line-height:7.00px;color:#a8a8a8;transform:scaleX(0.870);">0</span>
<span class="t" style="left:26.80px;top:551.00px;font-size:6.2px;line-height:7.00px;color:#a8a8a8;transform:scaleX(0.870);">0</span>
<div class="a" style="left:33.5px;top:538.7px;width:2.5px;height:1px;background:#5b5b5b;"></div>
<div class="a" style="left:33.5px;top:545.9px;width:2.5px;height:1px;background:#5b5b5b;"></div>
<div class="a" style="left:33.5px;top:553.1px;width:2.5px;height:1px;background:#5b5b5b;"></div>
<div class="a" style="left:26px;top:560.2px;width:10px;height:1px;background:#626262;"></div>
<span class="t" style="left:26.80px;top:562.00px;font-size:6.2px;line-height:7.00px;color:#a8a8a8;transform:scaleX(0.870);">2</span>
<span class="t" style="left:26.80px;top:568.00px;font-size:6.2px;line-height:7.00px;color:#a8a8a8;transform:scaleX(0.870);">6</span>
<span class="t" style="left:26.80px;top:574.00px;font-size:6.2px;line-height:7.00px;color:#a8a8a8;transform:scaleX(0.870);">0</span>
<span class="t" style="left:26.80px;top:580.00px;font-size:6.2px;line-height:7.00px;color:#a8a8a8;transform:scaleX(0.870);">0</span>
<div class="a" style="left:33.5px;top:567.4px;width:2.5px;height:1px;background:#5b5b5b;"></div>
<div class="a" style="left:33.5px;top:574.6px;width:2.5px;height:1px;background:#5b5b5b;"></div>
<div class="a" style="left:33.5px;top:581.8px;width:2.5px;height:1px;background:#5b5b5b;"></div>
<div class="a" style="left:26px;top:589.0px;width:10px;height:1px;background:#626262;"></div>
<span class="t" style="left:26.80px;top:591.00px;font-size:6.2px;line-height:7.00px;color:#a8a8a8;transform:scaleX(0.870);">2</span>
<span class="t" style="left:26.80px;top:597.00px;font-size:6.2px;line-height:7.00px;color:#a8a8a8;transform:scaleX(0.870);">8</span>
<span class="t" style="left:26.80px;top:603.00px;font-size:6.2px;line-height:7.00px;color:#a8a8a8;transform:scaleX(0.870);">0</span>
<span class="t" style="left:26.80px;top:609.00px;font-size:6.2px;line-height:7.00px;color:#a8a8a8;transform:scaleX(0.870);">0</span>
<div class="a" style="left:33.5px;top:596.2px;width:2.5px;height:1px;background:#5b5b5b;"></div>
<div class="a" style="left:33.5px;top:603.4px;width:2.5px;height:1px;background:#5b5b5b;"></div>
<div class="a" style="left:33.5px;top:610.6px;width:2.5px;height:1px;background:#5b5b5b;"></div>
<div class="a" style="left:26px;top:617.8px;width:10px;height:1px;background:#626262;"></div>
<span class="t" style="left:26.80px;top:619.00px;font-size:6.2px;line-height:7.00px;color:#a8a8a8;transform:scaleX(0.870);">3</span>
<span class="t" style="left:26.80px;top:625.00px;font-size:6.2px;line-height:7.00px;color:#a8a8a8;transform:scaleX(0.870);">0</span>
<span class="t" style="left:26.80px;top:631.00px;font-size:6.2px;line-height:7.00px;color:#a8a8a8;transform:scaleX(0.870);">0</span>
<span class="t" style="left:26.80px;top:637.00px;font-size:6.2px;line-height:7.00px;color:#a8a8a8;transform:scaleX(0.870);">0</span>
<div class="a" style="left:33.5px;top:624.9px;width:2.5px;height:1px;background:#5b5b5b;"></div>
<div class="a" style="left:33.5px;top:632.1px;width:2.5px;height:1px;background:#5b5b5b;"></div>
<div class="a" style="left:33.5px;top:639.3px;width:2.5px;height:1px;background:#5b5b5b;"></div>
<div class="a" style="left:26px;top:646.5px;width:10px;height:1px;background:#626262;"></div>
<span class="t" style="left:26.80px;top:648.00px;font-size:6.2px;line-height:7.00px;color:#a8a8a8;transform:scaleX(0.870);">3</span>
<span class="t" style="left:26.80px;top:654.00px;font-size:6.2px;line-height:7.00px;color:#a8a8a8;transform:scaleX(0.870);">2</span>
<span class="t" style="left:26.80px;top:660.00px;font-size:6.2px;line-height:7.00px;color:#a8a8a8;transform:scaleX(0.870);">0</span>
<span class="t" style="left:26.80px;top:666.00px;font-size:6.2px;line-height:7.00px;color:#a8a8a8;transform:scaleX(0.870);">0</span>
<div class="a" style="left:33.5px;top:653.7px;width:2.5px;height:1px;background:#5b5b5b;"></div>
<div class="a" style="left:33.5px;top:660.9px;width:2.5px;height:1px;background:#5b5b5b;"></div>
<div class="a" style="left:33.5px;top:668.1px;width:2.5px;height:1px;background:#5b5b5b;"></div>
<div class="a" style="left:26px;top:675.2px;width:10px;height:1px;background:#626262;"></div>
<span class="t" style="left:26.80px;top:677.00px;font-size:6.2px;line-height:7.00px;color:#a8a8a8;transform:scaleX(0.870);">3</span>
<span class="t" style="left:26.80px;top:683.00px;font-size:6.2px;line-height:7.00px;color:#a8a8a8;transform:scaleX(0.870);">4</span>
<span class="t" style="left:26.80px;top:689.00px;font-size:6.2px;line-height:7.00px;color:#a8a8a8;transform:scaleX(0.870);">0</span>
<span class="t" style="left:26.80px;top:695.00px;font-size:6.2px;line-height:7.00px;color:#a8a8a8;transform:scaleX(0.870);">0</span>
<div class="a" style="left:33.5px;top:682.4px;width:2.5px;height:1px;background:#5b5b5b;"></div>
<div class="a" style="left:33.5px;top:689.6px;width:2.5px;height:1px;background:#5b5b5b;"></div>
<div class="a" style="left:33.5px;top:696.8px;width:2.5px;height:1px;background:#5b5b5b;"></div>
<div class="a" style="left:26px;top:704.0px;width:10px;height:1px;background:#626262;"></div>
<span class="t" style="left:26.80px;top:706.00px;font-size:6.2px;line-height:7.00px;color:#a8a8a8;transform:scaleX(0.870);">3</span>
<span class="t" style="left:26.80px;top:712.00px;font-size:6.2px;line-height:7.00px;color:#a8a8a8;transform:scaleX(0.870);">6</span>
<span class="t" style="left:26.80px;top:718.00px;font-size:6.2px;line-height:7.00px;color:#a8a8a8;transform:scaleX(0.870);">0</span>
<span class="t" style="left:26.80px;top:724.00px;font-size:6.2px;line-height:7.00px;color:#a8a8a8;transform:scaleX(0.870);">0</span>
<div class="a" style="left:33.5px;top:711.2px;width:2.5px;height:1px;background:#5b5b5b;"></div>
<span class="t" style="left:26.80px;top:74.00px;font-size:8px;line-height:9.00px;color:#bdbdbd;transform:scaleX(0.989);">8</span>
<span class="t" style="left:26.80px;top:82.00px;font-size:8px;line-height:9.00px;color:#bdbdbd;transform:scaleX(0.989);">0</span>
<span class="t" style="left:26.80px;top:90.00px;font-size:8px;line-height:9.00px;color:#bdbdbd;transform:scaleX(0.989);">0</span>
<div class="a" style="left:25px;top:712.5px;width:840px;height:8px;background:#535353;"></div>
<span class="t" style="left:30.50px;top:713.00px;font-size:8px;line-height:9.00px;color:#e2e2e2;transform:scaleX(0.719);">20.66%</span>
<span class="t" style="left:70.80px;top:713.00px;font-size:8px;line-height:9.00px;color:#e2e2e2;transform:scaleX(0.773);">2232 px x 2854 px (250 ppi)</span>
<span class="t" style="left:164.00px;top:713.00px;font-size:9px;line-height:10.00px;color:#cfcfcf;transform:scaleX(0.868);">›</span>
<div class="a" style="left:858.8px;top:41px;width:10.7px;height:679px;background:#474747;"></div>
<div class="a" style="left:868.8px;top:41px;width:2px;height:679px;background:#3e3e3e;"></div>
<div class="a" style="left:870.6px;top:41px;width:24.6px;height:679px;background:#505050;"></div>
<div class="a" style="left:870.6px;top:41px;width:24.6px;height:8px;background:#404040;"></div>
<div class="a" style="left:895.2px;top:41px;width:2px;height:679px;background:#444;"></div>
<svg style="left:885.5px;top:42.8px" width="5" height="4" viewBox="0 0 10 8"><path d="M1 1 L4 4 L1 7 M6 1 L9 4 L6 7" fill="none" stroke="#cfcfcf" stroke-width="1.6"/></svg>
<div class="a" style="left:871px;top:97.5px;width:24px;height:1px;background:#444;"></div>
<div class="a" style="left:871px;top:145px;width:24px;height:1px;background:#444;"></div>
<div class="a" style="left:871px;top:173.5px;width:24px;height:1px;background:#444;"></div>
<div class="a" style="left:871px;top:202px;width:24px;height:1px;background:#444;"></div>
<div class="a" style="left:877px;top:52.5px;width:12px;height:1px;background:#5e5e5e;"></div>
<div class="a" style="left:877px;top:100.5px;width:12px;height:1px;background:#5e5e5e;"></div>
<div class="a" style="left:877px;top:148px;width:12px;height:1px;background:#5e5e5e;"></div>
<div class="a" style="left:877px;top:176.5px;width:12px;height:1px;background:#5e5e5e;"></div>
<svg style="left:876px;top:58.5px" width="14" height="13" viewBox="0 0 28 26"><path d="M25 2 L27 4 L15 17 L11.5 14 Z" fill="#dedede"/><path d="M10.5 15 L14 18.2 C13 23 8 24 4 23.5 C7 21.5 6.5 17 10.5 15 Z" fill="#dedede"/><path d="M2 4 H10 M2 8 H8 M2 12 H6" stroke="#dedede" stroke-width="1.6"/></svg>
<svg style="left:877px;top:78px" width="13" height="12" viewBox="0 0 26 24"><path d="M0 6 H26 M0 18 H26" stroke="#dedede" stroke-width="2.4"/><circle cx="7" cy="6" r="4.2" fill="#dedede"/><path d="M16 12 L23 18 L16 24 Z" fill="#dedede"/><rect x="20" y="13" width="4" height="10" fill="#dedede"/></svg>
<span class="t" style="left:877.30px;top:106.00px;font-size:13.5px;line-height:15.00px;color:#dedede;transform:scaleX(0.955);">A</span>
<div class="a" style="left:887.5px;top:107px;width:1.2px;height:13px;background:#dedede;"></div>
<span class="t" style="left:879.00px;top:126.00px;font-size:12px;line-height:14.00px;color:#dedede;font-weight:bold;transform:scaleX(1.199);">¶</span>
<span class="t" style="left:877.50px;top:152.00px;font-size:15px;line-height:16.00px;color:#dedede;font-weight:bold;font-family:'Liberation Serif',serif;transform:scaleX(1.015);opacity:;font-style:italic;">A</span>
<svg style="left:877.3px;top:182.5px" width="12" height="13" viewBox="0 0 24 26"><path d="M12 1.5 L22.5 7 V19 L12 24.5 L1.5 19 V7 Z M1.5 7 L12 12.5 L22.5 7 M12 12.5 V24.5" fill="none" stroke="#dedede" stroke-width="2" stroke-linejoin="round"/></svg>
<div class="a" style="left:897px;top:41px;width:183px;height:679px;background:#535353;"></div>
<div class="a" style="left:897px;top:41px;width:183px;height:9px;background:#404040;"></div>
<svg style="left:1066px;top:42.8px" width="5" height="4" viewBox="0 0 10 8"><path d="M1 1 L4 4 L1 7 M6 1 L9 4 L6 7" fill="none" stroke="#cfcfcf" stroke-width="1.6"/></svg>
<div class="a" style="left:897px;top:49.6px;width:183px;height:18.9px;background:#424242;"></div>
<div class="a" style="left:1009.6px;top:49.6px;width:40.2px;height:19px;background:#535353;"></div>
<span class="t" style="left:901.30px;top:54.00px;font-size:7.5px;line-height:9.00px;color:#9d9d9d;font-weight:bold;transform:scaleX(0.794);">Swatc</span>
<span class="t" style="left:924.20px;top:54.00px;font-size:7.5px;line-height:9.00px;color:#9d9d9d;font-weight:bold;transform:scaleX(0.827);">Gradi</span>
<span class="t" style="left:946.70px;top:54.00px;font-size:7.5px;line-height:9.00px;color:#9d9d9d;font-weight:bold;transform:scaleX(0.804);">Patter</span>
<span class="t" style="left:969.20px;top:54.00px;font-size:7.5px;line-height:9.00px;color:#9d9d9d;font-weight:bold;transform:scaleX(0.789);">Histor</span>
<span class="t" style="left:991.50px;top:54.00px;font-size:7.5px;line-height:9.00px;color:#9d9d9d;font-weight:bold;transform:scaleX(0.742);">Action</span>
<span class="t" style="left:1014.40px;top:54.00px;font-size:7.8px;line-height:9.00px;color:#f4f4f4;font-weight:bold;transform:scaleX(0.798);">Properties</span>
<div class="a" style="left:1065.4px;top:56.2px;width:6.4px;height:1.1px;background:#c8c8c8;"></div>
<div class="a" style="left:1065.4px;top:58.2px;width:6.4px;height:1.1px;background:#c8c8c8;"></div>
<div class="a" style="left:1065.4px;top:60.2px;width:6.4px;height:1.1px;background:#c8c8c8;"></div>
<div class="a" style="left:1074.6px;top:68.5px;width:5.4px;height:316px;background:#484848;"></div>
<div class="a" style="left:1066.2px;top:94px;width:8.4px;height:273px;background:#5c5c5c;"></div>
<div class="a" style="left:1066.8px;top:104px;width:7.4px;height:223px;background:#6a6a6a;"></div>
<svg style="left:1068.2px;top:98px" width="4.4" height="3" viewBox="0 0 10 7"><path d="M1 6 L5 1.5 L9 6" fill="none" stroke="#858585" stroke-width="1.9"/></svg>
<svg style="left:1068.2px;top:360px" width="4.4" height="3" viewBox="0 0 10 7"><path d="M1 1 L5 5.5 L9 1" fill="none" stroke="#858585" stroke-width="1.9"/></svg>
<div class="a" style="left:903.3px;top:73.5px;width:13.2px;height:14.2px;background:#3a3a3a;"></div>
<svg style="left:906.3px;top:75.6px" width="7.4" height="9.8" viewBox="0 0 15 20"><path d="M1.2 1.2 H9 L13.8 6 V18.8 H1.2 Z M9 1.2 V6 H13.8" fill="none" stroke="#e8e8e8" stroke-width="1.8"/></svg>
<span class="t" style="left:920.60px;top:77.00px;font-size:8px;line-height:9.00px;color:#e6e6e6;transform:scaleX(0.773);">Document</span>
<div class="a" style="left:897px;top:92.4px;width:169px;height:1px;background:#484848;"></div>
<svg style="left:900.4px;top:100.6px" width="4.4" height="3.2" viewBox="0 0 10 7"><path d="M1 1 L5 5.5 L9 1" fill="none" stroke="#a8a8a8" stroke-width="1.9"/></svg>
<span class="t" style="left:909.60px;top:98.00px;font-size:7.9px;line-height:9.00px;color:#f2f2f2;font-weight:bold;transform:scaleX(0.818);">Canvas</span>
<span class="t" style="left:929.00px;top:116.00px;font-size:8px;line-height:9.00px;color:#c8c8c8;transform:scaleX(0.662);">W</span>
<div class="a" style="left:938.3px;top:114.8px;width:31.3px;height:10.5px;background:#434343;"></div>
<span class="t" style="left:940.80px;top:116.00px;font-size:8px;line-height:9.00px;color:#f0f0f0;transform:scaleX(0.790);">2232 px</span>
<span class="t" style="left:980.00px;top:116.00px;font-size:8px;line-height:9.00px;color:#c8c8c8;transform:scaleX(0.862);">X</span>
<div class="a" style="left:989.4px;top:114.8px;width:31.2px;height:10.5px;background:#585858;"></div>
<span class="t" style="left:992.00px;top:116.00px;font-size:8px;line-height:9.00px;color:#6e6e6e;transform:scaleX(0.728);">0 px</span>
<span class="t" style="left:929.60px;top:133.00px;font-size:8px;line-height:9.00px;color:#c8c8c8;transform:scaleX(0.762);">H</span>
<div class="a" style="left:938.3px;top:132.3px;width:31.3px;height:10.5px;background:#434343;"></div>
<span class="t" style="left:940.80px;top:133.00px;font-size:8px;line-height:9.00px;color:#f0f0f0;transform:scaleX(0.790);">2854 px</span>
<span class="t" style="left:980.00px;top:133.00px;font-size:8px;line-height:9.00px;color:#c8c8c8;transform:scaleX(0.862);">Y</span>
<div class="a" style="left:989.4px;top:132.3px;width:31.2px;height:10.5px;background:#585858;"></div>
<span class="t" style="left:992.00px;top:133.00px;font-size:8px;line-height:9.00px;color:#6e6e6e;transform:scaleX(0.728);">0 px</span>
<svg style="left:908px;top:123.4px" width="5.4" height="10.8" viewBox="0 0 11 22"><rect x="1.5" y="1.2" width="8" height="8.6" rx="3.6" fill="none" stroke="#dcdcdc" stroke-width="1.9"/><rect x="1.5" y="12.2" width="8" height="8.6" rx="3.6" fill="none" stroke="#dcdcdc" stroke-width="1.9"/><path d="M5.5 7 V15" stroke="#dcdcdc" stroke-width="1.6"/></svg>
<div class="a" style="left:938.8px;top:151.6px;width:13.7px;height:15.2px;background:#2e2e2e;"></div>
<svg style="left:941.6px;top:153.6px" width="8" height="11.4" viewBox="0 0 16 23"><rect x="1" y="1" width="14" height="21" fill="none" stroke="#e4e4e4" stroke-width="1.8"/><circle cx="8" cy="8.3" r="2.8" fill="#e4e4e4"/><path d="M3.6 21 V15.5 a4.4 4.4 0 0 1 8.8 0 V21 Z" fill="#e4e4e4"/></svg>
<svg style="left:956.7px;top:154.8px" width="11.8" height="9.2" viewBox="0 0 24 18.5"><rect x="1" y="1" width="22" height="16.5" fill="none" stroke="#e0e0e0" stroke-width="1.8"/><circle cx="12" cy="6.8" r="2.6" fill="#e0e0e0"/><path d="M6.5 16.5 V14.5 a5.5 4.6 0 0 1 11 0 V16.5 Z" fill="#e0e0e0"/></svg>
<span class="t" style="left:938.70px;top:176.00px;font-size:8px;line-height:9.00px;color:#dcdcdc;transform:scaleX(0.773);">Resolution: 250 pixels/inch</span>
<span class="t" style="left:918.80px;top:193.00px;font-size:8px;line-height:9.00px;color:#d2d2d2;transform:scaleX(0.750);">Mode</span>
<div class="a" style="left:939.2px;top:192px;width:81.6px;height:12.7px;background:#434343;"></div>
<span class="t" style="left:943.70px;top:194.00px;font-size:8px;line-height:9.00px;color:#f0f0f0;transform:scaleX(0.693);">RGB Color</span>
<svg style="left:1014.6px;top:197px" width="4.4" height="3.2" viewBox="0 0 10 7"><path d="M1 1 L5 5.5 L9 1" fill="none" stroke="#a8a8a8" stroke-width="1.9"/></svg>
<div class="a" style="left:939.2px;top:209.4px;width:81.6px;height:13.3px;background:#434343;"></div>
<span class="t" style="left:943.70px;top:212.00px;font-size:8px;line-height:9.00px;color:#f0f0f0;transform:scaleX(0.767);">16 Bits/Channel</span>
<svg style="left:1014.6px;top:214.6px" width="4.4" height="3.2" viewBox="0 0 10 7"><path d="M1 1 L5 5.5 L9 1" fill="none" stroke="#a8a8a8" stroke-width="1.9"/></svg>
<span class="t" style="left:926.00px;top:230.00px;font-size:8px;line-height:9.00px;color:#d2d2d2;transform:scaleX(0.734);">Fill</span>
<div class="a" style="left:938.9px;top:227.8px;width:10.8px;height:12.4px;background:#4b4b4b;border:1px solid #464646"></div>
<div class="a" style="left:953px;top:229.2px;width:67.8px;height:11.3px;background:#434343;"></div>
<span class="t" style="left:957.60px;top:231.00px;font-size:8px;line-height:9.00px;color:#f0f0f0;transform:scaleX(0.803);">Transparent</span>
<svg style="left:1014.6px;top:233.4px" width="4.4" height="3.2" viewBox="0 0 10 7"><path d="M1 1 L5 5.5 L9 1" fill="none" stroke="#a8a8a8" stroke-width="1.9"/></svg>
<div class="a" style="left:897px;top:247.3px;width:169px;height:1px;background:#484848;"></div>
<svg style="left:900.8px;top:256px" width="4.4" height="3.2" viewBox="0 0 10 7"><path d="M1 1 L5 5.5 L9 1" fill="none" stroke="#a8a8a8" stroke-width="1.9"/></svg>
<span class="t" style="left:911.20px;top:254.00px;font-size:7.9px;line-height:9.00px;color:#f2f2f2;font-weight:bold;transform:scaleX(0.792);">Rulers &amp; Grids</span>
<div class="a" style="left:903px;top:269.6px;width:15px;height:16.8px;background:#2e2e2e;"></div>
<svg style="left:905px;top:272.4px" width="11" height="11.4" viewBox="0 0 22 23"><path d="M1 22 V1 H21 V7 H7 V22 Z" fill="#e8e8e8"/></svg>
<svg style="left:925.7px;top:272.2px" width="10.8" height="11.8" viewBox="0 0 22 24"><rect x="1" y="1" width="20" height="22" fill="none" stroke="#dedede" stroke-width="1.8"/><path d="M7.7 1 V23 M14.3 1 V23 M1 8.3 H21 M1 15.7 H21" stroke="#dedede" stroke-width="1.6"/></svg>
<svg style="left:946.4px;top:272.2px" width="10.9" height="11.8" viewBox="0 0 22 24"><rect x="1" y="1" width="20" height="22" fill="none" stroke="#cfcfcf" stroke-width="1.8"/><rect x="5" y="5" width="12" height="14" fill="#6a6a6a" stroke="#a8a8a8" stroke-width="1.2" stroke-dasharray="2 1.5"/></svg>
<div class="a" style="left:975.3px;top:272.3px;width:45.5px;height:12.3px;background:#434343;"></div>
<span class="t" style="left:979.00px;top:274.00px;font-size:8px;line-height:9.00px;color:#f0f0f0;transform:scaleX(0.717);">Pixels</span>
<svg style="left:1014.6px;top:277.2px" width="4.4" height="3.2" viewBox="0 0 10 7"><path d="M1 1 L5 5.5 L9 1" fill="none" stroke="#a8a8a8" stroke-width="1.9"/></svg>
<div class="a" style="left:897px;top:293.8px;width:169px;height:1px;background:#484848;"></div>
<svg style="left:900.8px;top:303px" width="4.4" height="3.2" viewBox="0 0 10 7"><path d="M1 1 L5 5.5 L9 1" fill="none" stroke="#a8a8a8" stroke-width="1.9"/></svg>
<span class="t" style="left:910.30px;top:301.00px;font-size:7.9px;line-height:9.00px;color:#f2f2f2;font-weight:bold;transform:scaleX(0.792);">Guides</span>
<div class="a" style="left:903px;top:317px;width:15px;height:16.7px;background:#2e2e2e;"></div>
<svg style="left:905.4px;top:319.4px" width="10.4" height="12" viewBox="0 0 21 24"><path d="M5.5 0 V24 M10 0 V24" stroke="#e4e4e4" stroke-width="1.8"/><path d="M0 7.5 H21 M0 16.5 H21" stroke="#e4e4e4" stroke-width="1.8"/></svg>
<svg style="left:926px;top:319.4px" width="11.4" height="12" viewBox="0 0 23 24"><path d="M5 0 V24 M10 0 V24 M0 8 H20" stroke="#d8d8d8" stroke-width="1.8"/><rect x="12.5" y="15" width="9" height="7.5" fill="#ececec"/><path d="M14.5 15 v-2.5 a2.5 2.5 0 0 1 5 0 V15" fill="none" stroke="#ececec" stroke-width="1.6"/></svg>
<div class="a" style="left:944px;top:317px;width:15px;height:16.7px;background:#2e2e2e;"></div>
<svg style="left:946.2px;top:319.4px" width="11" height="12" viewBox="0 0 22 24"><path d="M5.5 0 V24" stroke="#e4e4e4" stroke-width="2"/><path d="M9 7 H20" stroke="#e0e0e0" stroke-width="1.8"/><path d="M7 7 L11.5 3.5 V10.5 Z" fill="#e0e0e0"/><path d="M16.5 11 V19" stroke="#e0e0e0" stroke-width="2.4"/><path d="M12.8 17 L16.5 23 L20.2 17 Z" fill="#e0e0e0"/></svg>
<div class="a" style="left:975.3px;top:320.2px;width:45.5px;height:13.2px;background:#434343;"></div>
<div class="a" style="left:979px;top:326.3px;width:26.5px;height:2.2px;background:#cfcfcf;"></div>
<svg style="left:1014.6px;top:325.2px" width="4.4" height="3.2" viewBox="0 0 10 7"><path d="M1 1 L5 5.5 L9 1" fill="none" stroke="#a8a8a8" stroke-width="1.9"/></svg>
<div class="a" style="left:897px;top:341px;width:169px;height:1px;background:#484848;"></div>
<svg style="left:900.8px;top:350.4px" width="4.4" height="3.2" viewBox="0 0 10 7"><path d="M1 1 L5 5.5 L9 1" fill="none" stroke="#a8a8a8" stroke-width="1.9"/></svg>
<span class="t" style="left:911.00px;top:348.00px;font-size:7.9px;line-height:9.00px;color:#f2f2f2;font-weight:bold;transform:scaleX(0.795);">Quick Actions</span>
<div class="a" style="left:897px;top:384.6px;width:183px;height:3.6px;background:#3c3c3c;"></div>
<div class="a" style="left:897px;top:388.2px;width:183px;height:18.6px;background:#424242;"></div>
<div class="a" style="left:897px;top:388.2px;width:28.3px;height:18.8px;background:#535353;"></div>
<span class="t" style="left:901.70px;top:392.00px;font-size:7.9px;line-height:9.00px;color:#f4f4f4;font-weight:bold;transform:scaleX(0.730);">Layers</span>
<div class="a" style="left:1065.6px;top:394.6px;width:6.4px;height:1.1px;background:#c8c8c8;"></div>
<div class="a" style="left:1065.6px;top:396.6px;width:6.4px;height:1.1px;background:#c8c8c8;"></div>
<div class="a" style="left:1065.6px;top:398.6px;width:6.4px;height:1.1px;background:#c8c8c8;"></div>
<div class="a" style="left:1075px;top:407px;width:5px;height:313px;background:#4a4a4a;"></div>
<div class="a" style="left:899.5px;top:414px;width:52.4px;height:11.3px;background:#434343;"></div>
<svg style="left:903px;top:416.2px" width="6.6" height="6.8" viewBox="0 0 13 13.5"><circle cx="5.2" cy="5.2" r="3.8" fill="none" stroke="#e4e4e4" stroke-width="1.8"/><path d="M8 8 L12 12.5" stroke="#e4e4e4" stroke-width="2"/></svg>
<span class="t" style="left:912.00px;top:416.00px;font-size:8px;line-height:9.00px;color:#e6e6e6;font-weight:bold;transform:scaleX(0.720);">Kind</span>
<svg style="left:945.4px;top:418.4px" width="4.4" height="3.2" viewBox="0 0 10 7"><path d="M1 1 L5 5.5 L9 1" fill="none" stroke="#a8a8a8" stroke-width="1.9"/></svg>
<svg style="left:959.4px;top:416px" width="8.8" height="8" viewBox="0 0 18 16"><rect x="1" y="1" width="16" height="14" rx="1.5" fill="none" stroke="#dcdcdc" stroke-width="1.8"/><path d="M3.5 12.5 L7 7.5 L9.5 10.5 L11.5 8.5 L14.5 12.5 Z" fill="#dcdcdc"/><circle cx="12" cy="5" r="1.4" fill="#dcdcdc"/></svg>
<svg style="left:975.3px;top:416px" width="8" height="8" viewBox="0 0 16 16"><circle cx="8" cy="8" r="6.8" fill="none" stroke="#dcdcdc" stroke-width="1.8"/><path d="M3.2 12.8 A6.8 6.8 0 0 1 12.8 3.2 Z" fill="#dcdcdc"/></svg>
<svg style="left:990.2px;top:415.8px" width="8" height="8.4" viewBox="0 0 19 20"><path d="M1 1 H18 V5.5 H16.6 L16 3 H10.8 V17 L13.5 17.6 V19 H5.5 V17.6 L8.2 17 V3 H3 L2.4 5.5 H1 Z" fill="#dcdcdc"/></svg>
<svg style="left:1005px;top:415.8px" width="8.4" height="8.4" viewBox="0 0 17 17"><rect x="3" y="3" width="11" height="11" fill="none" stroke="#dcdcdc" stroke-width="1.6"/><rect x="0.5" y="0.5" width="4.4" height="4.4" fill="#dcdcdc"/><rect x="12.1" y="0.5" width="4.4" height="4.4" fill="#dcdcdc"/><rect x="0.5" y="12.1" width="4.4" height="4.4" fill="#dcdcdc"/><rect x="12.1" y="12.1" width="4.4" height="4.4" fill="#dcdcdc"/></svg>
<svg style="left:1020.8px;top:415.6px" width="7.8" height="8.8" viewBox="0 0 16 18"><path d="M1.2 1.2 H9.5 L14.8 6.5 V16.8 H1.2 Z" fill="none" stroke="#dcdcdc" stroke-width="1.8"/><path d="M9.5 1.2 V6.5 H14.8" fill="none" stroke="#dcdcdc" stroke-width="1.4"/><rect x="3" y="9.5" width="7" height="5.5" fill="#dcdcdc"/></svg>
<svg style="left:1035px;top:413.2px" width="6.4" height="10.6" viewBox="0 0 13 21"><path d="M3 8 L6.5 19 L10 8 Z" fill="#777"/><circle cx="6.5" cy="5.5" r="4.6" fill="#f6f6f6"/></svg>
<div class="a" style="left:897px;top:428.6px;width:178px;height:1px;background:#484848;"></div>
<div class="a" style="left:900px;top:434px;width:78px;height:11px;background:#4e4e4e;"></div>
<span class="t" style="left:903.70px;top:435.00px;font-size:8px;line-height:9.00px;color:#6c6c6c;transform:scaleX(0.749);">Normal</span>
<svg style="left:972px;top:438px" width="4.4" height="3.2" viewBox="0 0 10 7"><path d="M1 1 L5 5.5 L9 1" fill="none" stroke="#646464" stroke-width="1.9"/></svg>
<span class="t" style="left:983.00px;top:435.00px;font-size:8px;line-height:9.00px;color:#737373;transform:scaleX(0.750);">Opacity:</span>
<div class="a" style="left:1009px;top:434px;width:20.5px;height:11px;background:#474747;"></div>
<span class="t" style="left:1011.50px;top:435.00px;font-size:8px;line-height:9.00px;color:#626262;transform:scaleX(0.733);">100%</span>
<div class="a" style="left:1030.2px;top:434px;width:9.5px;height:11px;background:#505050;"></div>
<svg style="left:1032.6px;top:438.2px" width="4.4" height="3" viewBox="0 0 10 7"><path d="M1 1 L5 5.5 L9 1" fill="none" stroke="#646464" stroke-width="1.9"/></svg>
<div class="a" style="left:897px;top:447.5px;width:178px;height:1px;background:#484848;"></div>
<span class="t" style="left:900.00px;top:454.00px;font-size:8px;line-height:9.00px;color:#6e6e6e;transform:scaleX(0.680);">Lock:</span>
<svg style="left:920.3px;top:454.3px" width="7.4" height="7.6" viewBox="0 0 15 15"><rect x="0.8" y="0.8" width="13.4" height="13.4" fill="none" stroke="#d2d2d2" stroke-width="1.4" stroke-dasharray="2.4 1.6"/><rect x="3.5" y="3.5" width="4" height="4" fill="#d2d2d2"/><rect x="7.5" y="7.5" width="4" height="4" fill="#d2d2d2"/></svg>
<svg style="left:933.8px;top:453.5px" width="8.6" height="9.6" viewBox="0 0 18 20"><path d="M16 1 L17.5 2.5 L8.5 13 L6 10.5 Z" fill="#d2d2d2"/><path d="M5.4 11.4 L7.8 13.8 C7.4 17.5 3.5 18.6 1 18 C3.2 16.6 2.6 12.8 5.4 11.4 Z" fill="#d2d2d2"/></svg>
<svg style="left:947.3px;top:454px" width="8.4" height="8.4" viewBox="0 0 20 20"><path d="M10 0 L13 4 L11 4 L11 9 L16 9 L16 7 L20 10 L16 13 L16 11 L11 11 L11 16 L13 16 L10 20 L7 16 L9 16 L9 11 L4 11 L4 13 L0 10 L4 7 L4 9 L9 9 L9 4 L7 4 Z" fill="#d2d2d2"/></svg>
<svg style="left:960.9px;top:454.4px" width="8.6" height="8" viewBox="0 0 18 16"><path d="M4 0 V12 H18 M0 4 H13.5 V16" fill="none" stroke="#d2d2d2" stroke-width="1.7"/></svg>
<svg style="left:975.8px;top:453.4px" width="7.2" height="9.4" viewBox="0 0 14 19"><rect x="0.5" y="8" width="13" height="10.5" rx="1" fill="#d2d2d2"/><path d="M3.2 8 V5.2 a3.8 3.8 0 0 1 7.6 0 V8" fill="none" stroke="#d2d2d2" stroke-width="1.9"/></svg>
<span class="t" style="left:997.00px;top:454.00px;font-size:8px;line-height:9.00px;color:#737373;transform:scaleX(0.643);">Fill:</span>
<div class="a" style="left:1009px;top:453.2px;width:20.5px;height:11px;background:#474747;"></div>
<span class="t" style="left:1011.50px;top:454.00px;font-size:8px;line-height:9.00px;color:#626262;transform:scaleX(0.733);">100%</span>
<div class="a" style="left:1030.2px;top:453.2px;width:9.5px;height:11px;background:#505050;"></div>
<svg style="left:1032.6px;top:457.4px" width="4.4" height="3" viewBox="0 0 10 7"><path d="M1 1 L5 5.5 L9 1" fill="none" stroke="#646464" stroke-width="1.9"/></svg>
<div class="a" style="left:897px;top:470px;width:169.5px;height:1px;background:#4d4d4d;"></div>
<div class="a" style="left:914.5px;top:470px;width:1px;height:238px;background:#4d4d4d;"></div>
<div class="a" style="left:897px;top:486.5px;width:169.5px;height:1px;background:#4d4d4d;"></div>
<div class="a" style="left:897px;top:515.5px;width:169.5px;height:1px;background:#4d4d4d;"></div>
<div class="a" style="left:897px;top:543.8px;width:169.5px;height:1px;background:#4d4d4d;"></div>
<div class="a" style="left:897px;top:571.8px;width:169.5px;height:1px;background:#4d4d4d;"></div>
<div class="a" style="left:897px;top:599.8px;width:169.5px;height:1px;background:#4d4d4d;"></div>
<div class="a" style="left:897px;top:627.7px;width:169.5px;height:1px;background:#4d4d4d;"></div>
<div class="a" style="left:897px;top:655.7px;width:169.5px;height:1px;background:#4d4d4d;"></div>
<div class="a" style="left:897px;top:683.7px;width:169.5px;height:1px;background:#4d4d4d;"></div>
<svg style="left:901.4px;top:475.9px" width="8.2" height="6.4" viewBox="0 0 17 13"><path d="M0.3 6.5 C3.5 0.6 13.5 0.6 16.7 6.5 C13.5 12.4 3.5 12.4 0.3 6.5 Z" fill="#bdbdbd"/><circle cx="8.5" cy="6.3" r="2.7" fill="#4e4e4e"/><circle cx="8.5" cy="6.3" r="0.9" fill="#9a9a9a"/></svg>
<svg style="left:927.4px;top:476.8px" width="4.8" height="3.4" viewBox="0 0 10 7"><path d="M1 1 L5 5.5 L9 1" fill="none" stroke="#bdbdbd" stroke-width="1.9"/></svg>
<svg style="left:935px;top:474px" width="9.2" height="8.6" viewBox="0 0 19 17"><path d="M1 3 a1.5 1.5 0 0 1 1.5 -1.5 H7 L9 3.8 H16.5 A1.5 1.5 0 0 1 18 5.3 V6.5 H1 Z" fill="#e6e6e6"/><path d="M1 8 H18 V14.5 a1.5 1.5 0 0 1 -1.5 1.5 H2.5 A1.5 1.5 0 0 1 1 14.5 Z" fill="#e6e6e6"/></svg>
<span class="t" style="left:951.30px;top:474.00px;font-size:7.6px;line-height:9.00px;color:#f0f0f0;font-weight:bold;transform:scaleX(0.749);">edite text</span>
<svg style="left:901.4px;top:498.7px" width="8.2" height="6.4" viewBox="0 0 17 13"><path d="M0.3 6.5 C3.5 0.6 13.5 0.6 16.7 6.5 C13.5 12.4 3.5 12.4 0.3 6.5 Z" fill="#bdbdbd"/><circle cx="8.5" cy="6.3" r="2.7" fill="#4e4e4e"/><circle cx="8.5" cy="6.3" r="0.9" fill="#9a9a9a"/></svg>
<svg style="left:942.8px;top:496.5px" width="9.6" height="10" viewBox="0 0 19 20"><path d="M1 1 H18 V5.5 H16.6 L16 3 H10.8 V17 L13.5 17.6 V19 H5.5 V17.6 L8.2 17 V3 H3 L2.4 5.5 H1 Z" fill="#e6e6e6"/></svg>
<span class="t" style="left:962.70px;top:497.00px;font-size:7.6px;line-height:9.00px;color:#ececec;transform:scaleX(0.817);">Layer 2</span>
<svg style="left:901.4px;top:527.3px" width="8.2" height="6.4" viewBox="0 0 17 13"><path d="M0.3 6.5 C3.5 0.6 13.5 0.6 16.7 6.5 C13.5 12.4 3.5 12.4 0.3 6.5 Z" fill="#bdbdbd"/><circle cx="8.5" cy="6.3" r="2.7" fill="#4e4e4e"/><circle cx="8.5" cy="6.3" r="0.9" fill="#9a9a9a"/></svg>
<div class="a" style="left:937.8px;top:519.4px;width:15.5px;height:20.4px;background:repeating-conic-gradient(#d4d4d4 0 25%,#fff 0 50%) 0 0/4px 4px"></div>
<div class="a" style="left:938.8px;top:520.6px;width:2.2px;height:3.2px;background:#b5413a;"></div>
<span class="t" style="left:959.00px;top:526.00px;font-size:7.6px;line-height:9.00px;color:#ececec;transform:scaleX(0.809);">Layer 3</span>
<svg style="left:901.4px;top:555.8px" width="8.2" height="6.4" viewBox="0 0 17 13"><path d="M0.3 6.5 C3.5 0.6 13.5 0.6 16.7 6.5 C13.5 12.4 3.5 12.4 0.3 6.5 Z" fill="#bdbdbd"/><circle cx="8.5" cy="6.3" r="2.7" fill="#4e4e4e"/><circle cx="8.5" cy="6.3" r="0.9" fill="#9a9a9a"/></svg>
<svg style="left:942.8px;top:553.5px" width="9.6" height="10" viewBox="0 0 19 20"><path d="M1 1 H18 V5.5 H16.6 L16 3 H10.8 V17 L13.5 17.6 V19 H5.5 V17.6 L8.2 17 V3 H3 L2.4 5.5 H1 Z" fill="#e6e6e6"/></svg>
<span class="t" style="left:963.20px;top:554.00px;font-size:7.4px;line-height:9.00px;color:#ececec;transform:scaleX(0.891);">cilla0000000...&lt;&lt;&lt;&lt;&lt;&lt;&lt;&lt;0 d</span>
<svg style="left:942.8px;top:582.0px" width="9.6" height="10" viewBox="0 0 19 20"><path d="M1 1 H18 V5.5 H16.6 L16 3 H10.8 V17 L13.5 17.6 V19 H5.5 V17.6 L8.2 17 V3 H3 L2.4 5.5 H1 Z" fill="#e6e6e6"/></svg>
<span class="t" style="left:963.20px;top:583.00px;font-size:7.4px;line-height:9.00px;color:#ececec;transform:scaleX(0.761);">1aa</span>
<svg style="left:901.4px;top:612.9px" width="8.2" height="6.4" viewBox="0 0 17 13"><path d="M0.3 6.5 C3.5 0.6 13.5 0.6 16.7 6.5 C13.5 12.4 3.5 12.4 0.3 6.5 Z" fill="#bdbdbd"/><circle cx="8.5" cy="6.3" r="2.7" fill="#4e4e4e"/><circle cx="8.5" cy="6.3" r="0.9" fill="#9a9a9a"/></svg>
<svg style="left:942.8px;top:610.6px" width="9.6" height="10" viewBox="0 0 19 20"><path d="M1 1 H18 V5.5 H16.6 L16 3 H10.8 V17 L13.5 17.6 V19 H5.5 V17.6 L8.2 17 V3 H3 L2.4 5.5 H1 Z" fill="#e6e6e6"/></svg>
<span class="t" style="left:963.20px;top:611.00px;font-size:7.4px;line-height:9.00px;color:#ececec;transform:scaleX(0.761);">169</span>
<svg style="left:901.4px;top:641.5px" width="8.2" height="6.4" viewBox="0 0 17 13"><path d="M0.3 6.5 C3.5 0.6 13.5 0.6 16.7 6.5 C13.5 12.4 3.5 12.4 0.3 6.5 Z" fill="#bdbdbd"/><circle cx="8.5" cy="6.3" r="2.7" fill="#4e4e4e"/><circle cx="8.5" cy="6.3" r="0.9" fill="#9a9a9a"/></svg>
<svg style="left:942.8px;top:639.2px" width="9.6" height="10" viewBox="0 0 19 20"><path d="M1 1 H18 V5.5 H16.6 L16 3 H10.8 V17 L13.5 17.6 V19 H5.5 V17.6 L8.2 17 V3 H3 L2.4 5.5 H1 Z" fill="#e6e6e6"/></svg>
<span class="t" style="left:963.20px;top:640.00px;font-size:7.4px;line-height:9.00px;color:#ececec;transform:scaleX(0.730);">m</span>
<svg style="left:901.4px;top:669.9px" width="8.2" height="6.4" viewBox="0 0 17 13"><path d="M0.3 6.5 C3.5 0.6 13.5 0.6 16.7 6.5 C13.5 12.4 3.5 12.4 0.3 6.5 Z" fill="#bdbdbd"/><circle cx="8.5" cy="6.3" r="2.7" fill="#4e4e4e"/><circle cx="8.5" cy="6.3" r="0.9" fill="#9a9a9a"/></svg>
<svg style="left:942.8px;top:667.6px" width="9.6" height="10" viewBox="0 0 19 20"><path d="M1 1 H18 V5.5 H16.6 L16 3 H10.8 V17 L13.5 17.6 V19 H5.5 V17.6 L8.2 17 V3 H3 L2.4 5.5 H1 Z" fill="#e6e6e6"/></svg>
<span class="t" style="left:963.20px;top:668.00px;font-size:7.4px;line-height:9.00px;color:#ececec;transform:scaleX(0.659);">129 cm</span>
<svg style="left:901.4px;top:697.6px" width="8.2" height="6.4" viewBox="0 0 17 13"><path d="M0.3 6.5 C3.5 0.6 13.5 0.6 16.7 6.5 C13.5 12.4 3.5 12.4 0.3 6.5 Z" fill="#bdbdbd"/><circle cx="8.5" cy="6.3" r="2.7" fill="#4e4e4e"/><circle cx="8.5" cy="6.3" r="0.9" fill="#9a9a9a"/></svg>
<svg style="left:942.8px;top:695.3px" width="9.6" height="10" viewBox="0 0 19 20"><path d="M1 1 H18 V5.5 H16.6 L16 3 H10.8 V17 L13.5 17.6 V19 H5.5 V17.6 L8.2 17 V3 H3 L2.4 5.5 H1 Z" fill="#e6e6e6"/></svg>
<span class="t" style="left:963.20px;top:696.00px;font-size:7.4px;line-height:9.00px;color:#ececec;transform:scaleX(0.810);">01.01.1990</span>
<div class="a" style="left:901.5px;top:582px;width:9px;height:10px;background:#585858;opacity:.5"></div>
<div class="a" style="left:1066.3px;top:470px;width:8.4px;height:238px;background:#4c4c4c;"></div>
<div class="a" style="left:1067px;top:491px;width:7.2px;height:64px;background:#6a6a6a;"></div>
<svg style="left:1068.2px;top:475px" width="4.4" height="3" viewBox="0 0 10 7"><path d="M1 6 L5 1.5 L9 6" fill="none" stroke="#8c8c8c" stroke-width="1.9"/></svg>
<svg style="left:1068.2px;top:700px" width="4.4" height="3" viewBox="0 0 10 7"><path d="M1 1 L5 5.5 L9 1" fill="none" stroke="#8c8c8c" stroke-width="1.9"/></svg>
<div class="a" style="left:897px;top:707px;width:183px;height:13px;background:#535353;"></div>
<div class="a" style="left:897px;top:706.5px;width:183px;height:1px;background:#484848;"></div>
<svg style="left:950.5px;top:711px" width="9" height="6" viewBox="0 0 18 12"><rect x="1" y="2.5" width="8.5" height="7" rx="3.5" fill="none" stroke="#7a7a7a" stroke-width="1.8"/><rect x="8.5" y="2.5" width="8.5" height="7" rx="3.5" fill="none" stroke="#7a7a7a" stroke-width="1.8"/></svg>
<span class="t" style="left:968.20px;top:709.00px;font-size:9px;line-height:10.00px;color:#8a8a8a;font-family:'Liberation Serif',serif;transform:scaleX(0.867);font-style:italic;">fx</span>
<svg style="left:982.5px;top:710px" width="9.4" height="8" viewBox="0 0 19 16"><rect x="0.5" y="0.5" width="18" height="15" rx="1.5" fill="#c8c8c8"/><circle cx="9.5" cy="8" r="4.2" fill="#535353"/></svg>
<svg style="left:1001px;top:709.6px" width="8.4" height="8.4" viewBox="0 0 17 17"><circle cx="8.5" cy="8.5" r="7" fill="none" stroke="#c8c8c8" stroke-width="1.8"/><path d="M3.5 13.5 A7 7 0 0 1 13.5 3.5 Z" fill="#c8c8c8"/></svg>
<svg style="left:1017px;top:710px" width="9.4" height="8" viewBox="0 0 19 16"><path d="M0.5 2 a1.5 1.5 0 0 1 1.5 -1.5 H7 L9 2.8 H17 A1.5 1.5 0 0 1 18.5 4.3 V14 a1.5 1.5 0 0 1 -1.5 1.5 H2 A1.5 1.5 0 0 1 0.5 14 Z" fill="#c8c8c8"/></svg>
<svg style="left:1034.5px;top:709.4px" width="8.4" height="9" viewBox="0 0 17 18"><rect x="1" y="1" width="15" height="16" rx="1.5" fill="none" stroke="#c8c8c8" stroke-width="1.9"/><path d="M8.5 5 V13 M4.5 9 H12.5" stroke="#c8c8c8" stroke-width="1.9"/></svg>
<svg style="left:1050.5px;top:709.6px" width="7" height="8.8" viewBox="0 0 14 18"><path d="M1 3.5 H13 M5 3.5 V1.2 H9 V3.5 M2.5 3.5 L3.3 17 H10.7 L11.5 3.5" fill="none" stroke="#7d7d7d" stroke-width="1.8"/></svg>
<svg style="left:850px;top:655px" width="230" height="55" viewBox="850 655 230 55"><g fill="none" stroke="#262626" stroke-width="2.3" stroke-linejoin="miter" opacity=".88"><path d="M872 667.2 H858.2 V696 H872 M858.2 681.2 H870.5"/><path d="M876.6 666 V697.2 M877 684.5 L893 666.2 M881.5 679.5 L894.8 697.2"/><ellipse cx="907.8" cy="681.6" rx="10.2" ry="15.2"/><path d="M941.5 671.5 C938 664.5 927 664.5 924.6 675 C923 682 923.6 690 926.5 694 C930 698.5 938 697.5 941.8 693.5 V683.2 H934"/><path d="M964 667.2 H950.8 V696 H964.4 M950.8 681.2 H962.8"/><path d="M966.4 697.2 L976.3 666.4 H977.6 L987.6 697.2 M969.8 687 H984.2"/></g><rect x="991.4" y="693.2" width="3.6" height="4" fill="#262626"/><g fill="none" stroke="#7d9e22" stroke-width="3.7" opacity=".93"><ellipse cx="1010.2" cy="681.6" rx="9.8" ry="14.6"/><path d="M1029.3 698.2 V667 H1036 C1043.5 667 1043.5 681.6 1036 681.6 H1029.3 M1036 681.6 L1042.6 698.2"/><path d="M1066 672 C1062.5 664.8 1052.5 665 1050.5 675 C1049 682 1049.5 690 1052 693.6 C1055.5 698 1062.5 697 1066.3 693.6 V684 H1058.5"/></g></svg>
</div>
</div>
</body>
</html>
